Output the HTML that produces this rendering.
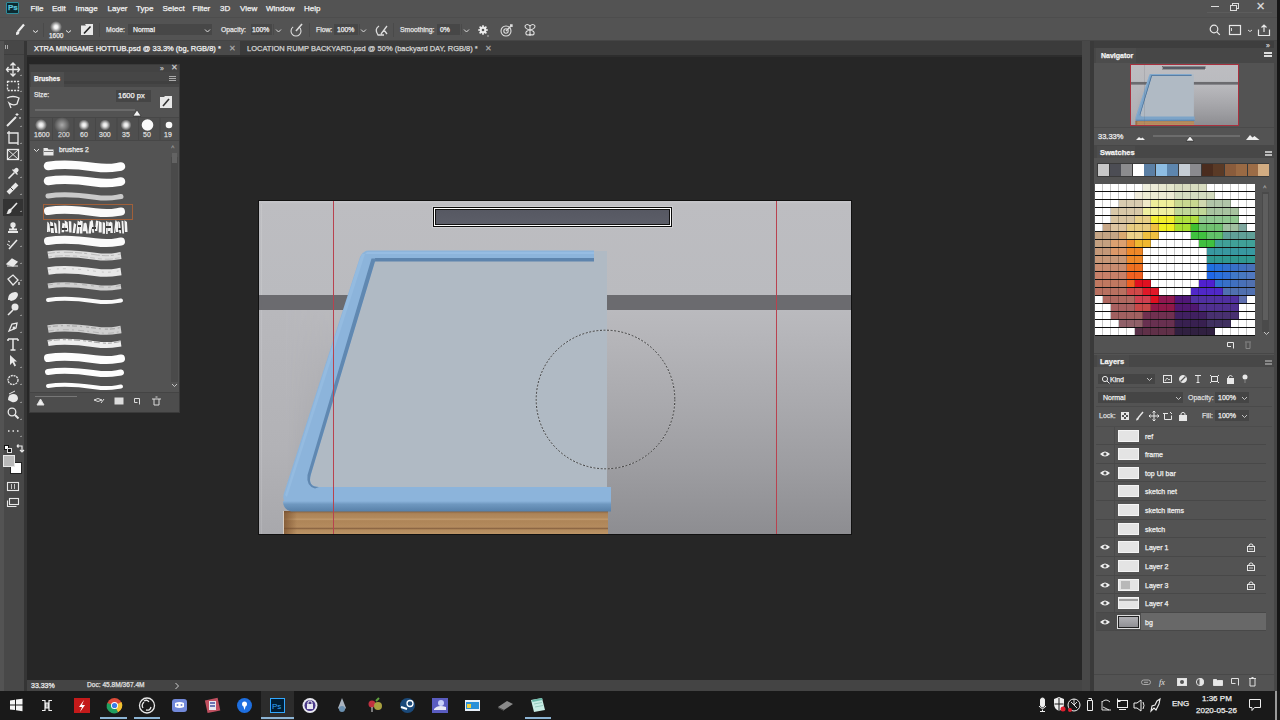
<!DOCTYPE html>
<html><head><meta charset="utf-8">
<style>
*{margin:0;padding:0;box-sizing:border-box}
html,body{width:1280px;height:720px;overflow:hidden;background:#262626;font-family:"Liberation Sans",sans-serif;color:#ddd}
.a{position:absolute}
.t{position:absolute;white-space:nowrap;font-size:9px;color:#e6e6e6;line-height:1;-webkit-text-stroke:0.25px currentColor}
svg{position:absolute;overflow:visible}
</style></head><body>
<!-- menu bar -->
<div class="a" style="left:0;top:0;width:1280px;height:17px;background:#535353"></div>
<div class="a" style="left:6px;top:2px;width:13px;height:12px;background:#0c2a30;border:1px solid #2e8c9c;border-radius:1px"></div>
<div class="t" style="left:8px;top:4px;font-size:8px;color:#5cc4dc;font-weight:bold">Ps</div>
<div class="t" style="left:30.5px;top:5px;font-size:8px;color:#f2f2f2">File</div>
<div class="t" style="left:52px;top:5px;font-size:8px;color:#f2f2f2">Edit</div>
<div class="t" style="left:75.5px;top:5px;font-size:8px;color:#f2f2f2">Image</div>
<div class="t" style="left:107.5px;top:5px;font-size:8px;color:#f2f2f2">Layer</div>
<div class="t" style="left:136px;top:5px;font-size:8px;color:#f2f2f2">Type</div>
<div class="t" style="left:162.5px;top:5px;font-size:8px;color:#f2f2f2">Select</div>
<div class="t" style="left:192.5px;top:5px;font-size:8px;color:#f2f2f2">Filter</div>
<div class="t" style="left:220px;top:5px;font-size:8px;color:#f2f2f2">3D</div>
<div class="t" style="left:240px;top:5px;font-size:8px;color:#f2f2f2">View</div>
<div class="t" style="left:266px;top:5px;font-size:8px;color:#f2f2f2">Window</div>
<div class="t" style="left:304px;top:5px;font-size:8px;color:#f2f2f2">Help</div>
<!-- window controls -->
<div class="a" style="left:1211px;top:6px;width:8px;height:1px;background:#ddd"></div>
<div class="a" style="left:1232px;top:3px;width:7px;height:6px;border:1px solid #ddd"></div>
<div class="a" style="left:1230px;top:5px;width:7px;height:6px;border:1px solid #ddd;background:#535353"></div>
<div class="t" style="left:1256px;top:1px;font-size:11px;color:#ddd">&#x2715;</div>
<!-- options bar -->
<div class="a" style="left:0;top:17px;width:1280px;height:24px;background:#535353;border-top:1px solid #4d4d4d"></div>
<div class="a" style="left:0;top:40px;width:1280px;height:1px;background:#454545"></div>
<!-- tab bar -->
<div class="a" style="left:27px;top:41px;width:1055px;height:15px;background:#3b3b3b"></div>
<div class="a" style="left:27px;top:41px;width:213px;height:15px;background:#4a4a4a"></div>
<div class="t" style="left:34px;top:45px;font-size:7.5px;color:#f4f4f4">XTRA MINIGAME HOTTUB.psd @ 33.3% (bg, RGB/8) *</div>
<div class="t" style="left:229px;top:45px;font-size:8px;color:#aaa">&#x2715;</div>
<div class="t" style="left:247px;top:45px;font-size:7.5px;color:#d4d4d4">LOCATION RUMP BACKYARD.psd @ 50% (backyard DAY, RGB/8) *</div>
<div class="t" style="left:485px;top:45px;font-size:8px;color:#aaa">&#x2715;</div>
<!-- left toolbar -->
<div class="a" style="left:0;top:41px;width:27px;height:650px;background:#484848"></div>
<div class="a" style="left:0;top:41px;width:4px;height:650px;background:#535353"></div>
<div class="a" style="left:24px;top:41px;width:3px;height:650px;background:#353535"></div>
<div class="a" style="left:4px;top:41px;width:20px;height:14px;background:#474747;border-bottom:1px solid #3e3e3e"></div><div class="a" style="left:5px;top:45px;width:1px;height:4px;background:#aaa"></div><div class="a" style="left:7px;top:45px;width:1px;height:4px;background:#aaa"></div>
<!-- canvas area top stripe -->
<div class="a" style="left:27px;top:55px;width:1055px;height:2px;background:#2d2d2d"></div>
<!-- right dock base -->
<div class="a" style="left:1082px;top:41px;width:198px;height:650px;background:#484848"></div>
<div class="a" style="left:1090px;top:41px;width:4px;height:650px;background:#3a3a3a"></div>
<div class="a" style="left:1094px;top:48px;width:180px;height:643px;background:#535353"></div>
<div class="a" style="left:1274px;top:41px;width:3px;height:650px;background:#474747"></div>
<!-- status bar -->
<div class="a" style="left:27px;top:680px;width:1055px;height:11px;background:#444444"></div>
<div class="t" style="left:31px;top:682px;font-size:7px;color:#f0f0f0">33.33%</div>
<div class="t" style="left:87px;top:682px;font-size:6.6px;color:#e0e0e0">Doc: 45.8M/367.4M</div>
<svg width="6" height="8" style="left:174px;top:682px" fill="none" stroke="#ddd" stroke-width="0.9"><path d="M1.5,1l3,3l-3,3"/></svg>
<!-- taskbar -->
<div class="a" style="left:0;top:691px;width:1280px;height:29px;background:#191919"></div>
<!-- document -->
<div class="a" style="left:258px;top:200px;width:594px;height:335px;background:#111"></div>
<!-- options bar contents -->
<svg width="100" height="22" style="left:0;top:18px" fill="none" stroke="#eee">
  <path d="M24,6.5l-6,7" stroke-width="2.2"/><path d="M17.5,13q-2,1 -1.5,4q3,0 3.5,-2.5z" fill="#eee" stroke="none"/>
  <path d="M33,12.5l2.5,2l2.5,-2" stroke-width="1"/>
  <path d="M43.5,5v14" stroke="#4a4a4a"/>
  <path d="M66,12.5l2.5,2l2.5,-2" stroke-width="1"/>
  <path d="M99.5,5v14" stroke="#4a4a4a"/>
</svg>
<svg width="12" height="12" style="left:50px;top:21px"><defs><radialGradient id="ob"><stop offset="0" stop-color="#fff"/><stop offset="0.3" stop-color="#eee"/><stop offset="1" stop-color="#ddd" stop-opacity="0"/></radialGradient></defs><circle cx="6" cy="6" r="6" fill="url(#ob)"/></svg>
<div class="t" style="left:49px;top:33px;font-size:6.5px;color:#e8e8e8">1600</div>
<div class="a" style="left:81px;top:24px;width:12px;height:11px;background:#e8e8e8"></div>
<svg width="12" height="11" style="left:81px;top:24px"><path d="M0,0h4l1,1.5h-5z" fill="#535353"/><path d="M3,9.5l6.5,-7" stroke="#222" stroke-width="1.6"/></svg>
<div class="t" style="left:106px;top:27px;font-size:6.8px;color:#e4e4e4">Mode:</div>
<div class="a" style="left:128px;top:24px;width:84px;height:11px;background:#474747"></div>
<div class="t" style="left:133px;top:27px;font-size:6.8px;color:#f0f0f0">Normal</div>
<svg width="8" height="6" style="left:204px;top:28px" fill="none" stroke="#ddd"><path d="M1,1.5l2.5,2.5l2.5,-2.5"/></svg>
<div class="t" style="left:221px;top:27px;font-size:6.8px;color:#e4e4e4">Opacity:</div>
<div class="a" style="left:251px;top:24px;width:21px;height:11px;background:#474747"></div>
<div class="t" style="left:252px;top:27px;font-size:6.8px;color:#f0f0f0">100%</div>
<div class="a" style="left:273px;top:24px;width:1px;height:11px;background:#4a4a4a"></div>
<svg width="8" height="6" style="left:275px;top:28px" fill="none" stroke="#ddd"><path d="M1,1.5l2.5,2.5l2.5,-2.5"/></svg>
<svg width="16" height="16" style="left:289px;top:22px" fill="none" stroke="#ddd" stroke-width="1.1"><circle cx="7" cy="9" r="5" stroke-dasharray="20 6"/><path d="M7,9l6,-7" stroke-width="1.6"/></svg>
<div class="a" style="left:309px;top:23px;width:1px;height:14px;background:#4a4a4a"></div>
<div class="t" style="left:316px;top:27px;font-size:6.8px;color:#e4e4e4">Flow:</div>
<div class="a" style="left:334px;top:24px;width:24px;height:11px;background:#474747"></div>
<div class="t" style="left:337px;top:27px;font-size:6.8px;color:#f0f0f0">100%</div>
<div class="a" style="left:358.5px;top:24px;width:1px;height:11px;background:#4a4a4a"></div>
<svg width="8" height="6" style="left:360px;top:28px" fill="none" stroke="#ddd"><path d="M1,1.5l2.5,2.5l2.5,-2.5"/></svg>
<svg width="18" height="14" style="left:372px;top:23px" fill="none" stroke="#ddd" stroke-width="1.3"><path d="M7,3q-5,3 -1,9h6M9,11l6,-8M12,7l3,4"/></svg>
<div class="a" style="left:393px;top:23px;width:1px;height:14px;background:#4a4a4a"></div>
<div class="t" style="left:400px;top:27px;font-size:6.8px;color:#e4e4e4">Smoothing:</div>
<div class="a" style="left:437px;top:24px;width:23px;height:11px;background:#474747"></div>
<div class="t" style="left:440px;top:27px;font-size:6.8px;color:#f0f0f0">0%</div>
<div class="a" style="left:461px;top:24px;width:1px;height:11px;background:#4a4a4a"></div>
<svg width="8" height="6" style="left:463px;top:28px" fill="none" stroke="#ddd"><path d="M1,1.5l2.5,2.5l2.5,-2.5"/></svg>
<svg width="14" height="14" style="left:477px;top:24px"><circle cx="6" cy="6" r="3.4" fill="#eee"/><path d="M6,1.2v9.6M1.2,6h9.6M2.6,2.6l6.8,6.8M9.4,2.6l-6.8,6.8" stroke="#eee" stroke-width="1.6"/><circle cx="6" cy="6" r="1.3" fill="#535353"/><path d="M10,12h2" stroke="#ccc" stroke-width="0.8"/></svg>
<svg width="16" height="16" style="left:499px;top:22px" fill="none" stroke="#ddd" stroke-width="1.1"><circle cx="7" cy="9" r="5"/><circle cx="7" cy="9" r="2.2"/><path d="M7,9l6,-6M11,3h2v2" stroke-width="1.3"/></svg>
<svg width="16" height="16" style="left:522px;top:22px" fill="none" stroke="#ddd" stroke-width="1.1"><path d="M8,3v11M8,4q-3,-3 -5,0q0,3 5,4q-5,1 -4,4q2,2 4,0M8,4q3,-3 5,0q0,3 -5,4q5,1 4,4q-2,2 -4,0" /></svg>
<!-- right side options -->
<svg width="70" height="16" style="left:1207px;top:22px" fill="none" stroke="#e8e8e8" stroke-width="1.2">
  <circle cx="7" cy="7" r="3.8"/><path d="M9.8,9.8l3,3"/>
  <rect x="22.5" y="3.5" width="11" height="9"/><path d="M24.5,6v3" stroke-width="0.9"/>
  <path d="M41,8l2,1.5l2,-1.5" stroke-width="0.9"/>
  <path d="M51.5,7.5v6h11v-6M57,3v7M54.5,5.5l2.5,-2.5l2.5,2.5"/>
</svg>
<!-- document content -->
<div class="a" style="left:259px;top:201px;width:592px;height:333px;overflow:hidden;background:linear-gradient(#c6c6ca,#bdbdc1 3px,#babbbf 94px,#bababe 110px,#b3b3b7 150px,#a8a8ac 210px,#9c9ca0 270px,#8d8d91 333px)">
  <div class="a" style="left:0;top:109px;width:90px;height:224px;background:linear-gradient(#b8b8bc,#b2b2b6 140px,#a8a8ac 224px);-webkit-mask-image:linear-gradient(to right,#000 30%,transparent);mask-image:linear-gradient(to right,#000 30%,transparent)"></div>
  <div class="a" style="left:2px;top:3px;width:1px;height:330px;background:rgba(255,255,255,0.12)"></div>
  <div class="a" style="left:0;top:94px;width:592px;height:15px;background:#6b6b6f"></div>
  <svg width="592" height="333" style="left:0;top:0">
    <defs>
      <linearGradient id="wood" x1="0" y1="0" x2="0" y2="1">
        <stop offset="0" stop-color="#84603e"/>
        <stop offset="0.12" stop-color="#ad8458"/>
        <stop offset="0.3" stop-color="#b38a5c"/>
        <stop offset="0.36" stop-color="#c29a6c"/>
        <stop offset="0.42" stop-color="#ae8558"/>
        <stop offset="0.7" stop-color="#b48b5e"/>
        <stop offset="0.76" stop-color="#8c6644"/>
        <stop offset="0.82" stop-color="#b48c5e"/>
        <stop offset="1" stop-color="#bc9466"/>
      </linearGradient>
      <linearGradient id="woodL" x1="0" y1="0" x2="1" y2="0">
        <stop offset="0" stop-color="#704828" stop-opacity="0.7"/>
        <stop offset="1" stop-color="#704828" stop-opacity="0"/>
      </linearGradient>
      <linearGradient id="bblue" x1="0" y1="0" x2="0" y2="1">
        <stop offset="0" stop-color="#8cb4db"/>
        <stop offset="0.3" stop-color="#6f98c0"/>
        <stop offset="1" stop-color="#5880a8"/>
      </linearGradient>
    </defs>
    <polygon points="106,50 348,50 348,292 30,292" fill="#b0bac4"/>
    <rect x="24" y="310" width="325" height="23" fill="url(#wood)"/>
    <rect x="24" y="310" width="14" height="23" fill="url(#woodL)"/>
    <rect x="24" y="310" width="1" height="23" fill="#d8ccc0"/>
    <path d="M110,49.5 L335,49.5 L335,60 L116,60 L52,273 Q48,286 60,286 L352,286 L352,304 L32,304 Q22,302 25,292 L101,56 Q104,49.5 110,49.5 Z" fill="#8cb4db"/>
    <path d="M108,51 L335,51 L335,53 L106,53 Z" fill="#9cc2e6" opacity="0.6"/>
    <path d="M100,60 L103,53 L106,53 L28,296 L26,294 Z" fill="#9cc2e6" opacity="0.5"/>
    <path d="M116,57 L335,57 L335,60.5 L116,60.5 Z" fill="#5d84ad"/>
    <path d="M112.5,57.5 L117,57.5 L116,60.5 L52,273 Q48,286 60,286 L56,287.5 Q47,285 48.5,274 Z" fill="#6088b1"/>
    <path d="M24,300 L352,300 L352,310.5 L32,310.5 Q24,308.5 24,300 Z" fill="url(#bblue)"/>
  </svg>
  <!-- top UI bar -->
  <div class="a" style="left:173px;top:5px;width:241px;height:22px;border:1px solid rgba(255,255,255,0.25)"></div>
  <div class="a" style="left:174px;top:6px;width:239px;height:20px;border:1px solid #0a0a0a;background:#fff"></div>
  <div class="a" style="left:176px;top:8px;width:235px;height:16px;border:1px solid #111;background:linear-gradient(#565862,#5c5e68)"></div>
  <!-- guides -->
  <div class="a" style="left:74px;top:0;width:1px;height:333px;background:#b8424f"></div>
  <div class="a" style="left:517px;top:0;width:1px;height:333px;background:#b8424f"></div>
  <!-- brush cursor -->
  <svg width="592" height="333" style="left:0;top:0">
    <circle cx="346.5" cy="198.5" r="69.3" fill="none" stroke="#e0e0e0" stroke-width="0.8" opacity="0.5"/><circle cx="346.5" cy="198.5" r="69.3" fill="none" stroke="#1a1a1a" stroke-width="0.8" stroke-dasharray="2 1.6"/>
  </svg>
</div>
<!-- toolbar icons -->

<div class="a" style="left:3px;top:199px;width:20px;height:17px;background:#333333"></div>
<svg width="27" height="460" style="left:0;top:60px" fill="none" stroke="#e8e8e8" stroke-width="1.3">
  <!-- move y69 -->
  <path d="M13,3v13M6.5,9.5h13M10.5,5.5l2.5-2.5l2.5,2.5M10.5,13.5l2.5,2.5l2.5-2.5M8.5,7l-2,2.5l2,2.5M17.5,7l2,2.5l-2,2.5"/>
  <!-- marquee y86 -->
  <rect x="7.5" y="21.5" width="11" height="9" stroke-dasharray="2 1.2"/>
  <!-- lasso y103 -->
  <path d="M7,38 q6,-3 12,0 l-2,6 q-4,2 -8,-1 l2,5"/>
  <!-- magic wand y120 -->
  <path d="M7,66 l9,-9" stroke-width="2"/><path d="M17,53v3M15.5,54.5h3M19,58h2" stroke-width="1"/>
  <!-- crop y138 -->
  <path d="M9,71v12h9M7,73h11v12" />
  <!-- frame y155 -->
  <rect x="7.5" y="89.5" width="11" height="10"/><path d="M7.5,89.5l11,10M18.5,89.5l-11,10" stroke-width="1"/>
  <!-- eyedropper y172 -->
  <path d="M8.5,118.5 l6,-6" stroke-width="1.6"/><path d="M13,110.5l2,-2q1.5,-1.5 3,0t0,3l-2,2z" fill="#e8e8e8" stroke="none"/><path d="M12.5,109.5l5,5" stroke-width="1.2"/>
  <!-- healing y189 -->
  <path d="M8,133 l9,-9" stroke-width="4"/><path d="M10,127l3,3" stroke="#484848" stroke-width="1"/>
  <!-- brush y207 -->
  <path d="M11,149.5 l6,-6.5" stroke-width="1.6"/><path d="M10.5,148.5q-2,0 -2.8,2.5q-0.5,2 -1.2,3q3,0 4.5,-1.5q1,-1.5 0.5,-3z" fill="#e8e8e8" stroke="none"/>
  <!-- stamp y224 -->
  <path d="M8,172h10M9,169.5h8M13,166v3" stroke-width="2"/><circle cx="13" cy="165" r="2" fill="#e8e8e8"/>
  <!-- history brush y241 -->
  <path d="M9,189 l8,-9" stroke-width="1.6"/><path d="M7,184l3,2M8,181l2,1" stroke-width="1"/>
  <!-- eraser y259 -->
  <path d="M7,204 l5,-5 l5,3 l-4,4 z" fill="#e8e8e8"/><path d="M7,206h11" stroke-width="1"/>
  <!-- bucket y276 -->
  <path d="M8,219 l5,-4 l5,5 l-5,5 z" /><path d="M19,222v3" stroke-width="1.4"/>
  <!-- smudge y293 -->
  <path d="M8,239 q0,-6 7,-7 q3,0 3,3 q-1,5 -7,6 z" fill="#e8e8e8" stroke="none"/><path d="M8,240l2,-2" stroke-width="1"/>
  <!-- dodge y310 -->
  <circle cx="15" cy="247" r="3.5" fill="#e8e8e8" stroke="none"/><path d="M13,250l-5,5" stroke-width="1.6"/>
  <!-- pen y327 -->
  <path d="M9,271 l3,-7 l5,-1 l-1,5 z"/><circle cx="14" cy="268" r="0.8" fill="#e8e8e8"/>
  <!-- type y344 -->
  <path d="M8,279h10M13,279v11M10.5,290h5M8,279v2M18,279v2" stroke-width="1.5"/>
  <!-- path select y362 -->
  <path d="M10,295 l0,10 l2.5,-2.5 l2,4 l1.5,-1 l-2,-4 l3,0 z" fill="#e8e8e8" stroke="none"/>
  <!-- ellipse y380 -->
  <ellipse cx="13" cy="320" rx="5" ry="4.5" stroke-dasharray="2 0.8"/>
  <!-- hand y397 -->
  <path d="M8,340 q0,-6 5,-6 q5,0 5,5 q-2,4 -6,3 z" fill="#e8e8e8" stroke="none"/><path d="M9,334 l6,-3" stroke-width="1"/>
  <!-- zoom y414 -->
  <circle cx="12" cy="352" r="3.8"/><path d="M15,355 l3.5,3.5" stroke-width="2"/>
  <!-- dots y431 -->
  <path d="M8,371h1.5M12.5,371h1.5M17,371h1.5" stroke-width="1.5"/>
</svg>
<!-- tiny triangles -->
<svg width="27" height="460" style="left:0;top:60px" fill="#cfcfcf">
  <path d="M20,16h1.5v-1.5z M20,32h1.5v-1.5z M20,50h1.5v-1.5z M20,67h1.5v-1.5z M20,84h1.5v-1.5z M20,101h1.5v-1.5z M20,118h1.5v-1.5z M20,135h1.5v-1.5z M20,152h1.5v-1.5z M20,170h1.5v-1.5z M20,187h1.5v-1.5z M20,204h1.5v-1.5z M20,221h1.5v-1.5z M20,239h1.5v-1.5z M20,256h1.5v-1.5z M20,273h1.5v-1.5z M20,290h1.5v-1.5z M20,308h1.5v-1.5z M20,325h1.5v-1.5z M20,343h1.5v-1.5z M20,360h1.5v-1.5z M20,377h1.5v-1.5z"/>
</svg>
<!-- swap / default colors -->
<div class="a" style="left:4px;top:445px;width:5px;height:5px;background:#fff;border:1px solid #111"></div>
<div class="a" style="left:7px;top:448px;width:5px;height:5px;background:#111;border:1px solid #ddd"></div>
<svg width="10" height="10" style="left:15px;top:444px" fill="none" stroke="#e8e8e8" stroke-width="1.2"><path d="M2,2h5v6M5,6l2,2l2,-2M2,2l1.5,-1.5M2,2l1.5,1.5"/></svg>
<!-- fg/bg color -->
<div class="a" style="left:10px;top:462px;width:12px;height:12px;background:#fff;border:1px solid #222"></div>
<div class="a" style="left:3px;top:455px;width:12px;height:12px;background:#b9b9b9;border:1px solid #e8e8e8"></div>
<!-- quick mask / screen mode -->
<svg width="27" height="40" style="left:0;top:478px" fill="none" stroke="#e8e8e8" stroke-width="1.1">
  <rect x="7.5" y="4.5" width="11" height="8"/><path d="M11.5,6v5M14.5,6v5" stroke-width="0.8"/>
  <rect x="9.5" y="20.5" width="9" height="6"/><path d="M7.5,22.5v6h9"/>
</svg>
<!-- brushes panel -->
<div class="a" style="left:29px;top:64px;width:151px;height:349px;background:#535353;border:1px solid #3a3a3a"></div>
<div class="a" style="left:30px;top:65px;width:149px;height:7px;background:#434343"></div>
<div class="a" style="left:30px;top:72px;width:149px;height:15px;background:#464646"></div>
<div class="a" style="left:64px;top:81px;width:115px;height:3px;background:#404040"></div>
<div class="a" style="left:31px;top:72px;width:33px;height:15px;background:#4e4e4e"></div>
<div class="t" style="left:34px;top:76px;font-size:6.5px;color:#f4f4f4;font-weight:bold">Brushes</div>
<div class="t" style="left:160px;top:65px;font-size:7px;color:#bbb">&#xBB;</div>
<div class="t" style="left:171px;top:64px;font-size:8px;color:#ccc">&#x2715;</div>
<div class="a" style="left:169px;top:76px;width:7px;height:1px;background:#aaa;box-shadow:0 2px 0 #aaa,0 4px 0 #aaa"></div>
<div class="t" style="left:34px;top:92px;font-size:6.8px;color:#e8e8e8">Size:</div>
<div class="a" style="left:116px;top:90px;width:35px;height:12px;background:#454545"></div>
<div class="t" style="left:118px;top:92px;font-size:7.5px;color:#f0f0f0">1600 px</div>
<div class="a" style="left:160px;top:96px;width:12px;height:12px;background:#e8e8e8"></div>
<svg width="12" height="12" style="left:160px;top:96px"><path d="M0,0h4l1,1h-5z" fill="#535353"/><path d="M3,10l6,-7" stroke="#333" stroke-width="1.6"/></svg>
<div class="a" style="left:35px;top:109px;width:100px;height:2px;background:#6a6a6a"></div>
<svg width="10" height="8" style="left:132px;top:110px"><path d="M5,0L9,6H1Z" fill="#f4f4f4" stroke="#222" stroke-width="0.6"/></svg>
<div class="a" style="left:30px;top:117px;width:149px;height:1px;background:#474747"></div>
<!-- preset row -->
<div class="a" style="left:30px;top:118px;width:149px;height:22px;background:#4f4f4f"></div>
<svg width="150" height="22" style="left:30px;top:118px">
  <defs><radialGradient id="sb"><stop offset="0" stop-color="#fff"/><stop offset="0.35" stop-color="#e0e0e0"/><stop offset="1" stop-color="#e0e0e0" stop-opacity="0"/></radialGradient>
  <radialGradient id="sb2"><stop offset="0" stop-color="#aaa"/><stop offset="1" stop-color="#aaa" stop-opacity="0"/></radialGradient></defs>
  <path d="M22.5,0v22M44,0v22M65.5,0v22M87,0v22M108.5,0v22M130,0v22" stroke="#474747" stroke-width="1"/>
  <circle cx="11" cy="7" r="6" fill="url(#sb)"/>
  <circle cx="32" cy="7" r="8" fill="url(#sb2)"/>
  <circle cx="54" cy="7" r="5.5" fill="url(#sb)"/>
  <circle cx="75" cy="7" r="5.5" fill="url(#sb)"/>
  <circle cx="96" cy="7" r="5.5" fill="url(#sb)"/>
  <circle cx="117.5" cy="7" r="5.8" fill="#fafafa"/>
  <circle cx="139" cy="7" r="3.3" fill="#fafafa"/>
</svg>
<div class="t" style="left:34px;top:131px;font-size:7px;color:#ddd">1600</div>
<div class="t" style="left:58px;top:131px;font-size:7px;color:#ccc">200</div>
<div class="t" style="left:80px;top:131px;font-size:7px;color:#ddd">60</div>
<div class="t" style="left:99px;top:131px;font-size:7px;color:#ddd">300</div>
<div class="t" style="left:122px;top:131px;font-size:7px;color:#ddd">35</div>
<div class="t" style="left:143px;top:131px;font-size:7px;color:#ddd">50</div>
<div class="t" style="left:164px;top:131px;font-size:7px;color:#ddd">19</div>
<div class="a" style="left:30px;top:140px;width:149px;height:1px;background:#474747"></div>
<!-- folder row -->
<svg width="30" height="12" style="left:33px;top:145px" fill="none" stroke="#e0e0e0">
  <path d="M1,4l2.5,2.5l2.5,-2.5" stroke-width="1"/>
  <path d="M10.5,3.5v7h10v-6h-5l-1,-1.5h-4z" fill="#e8e8e8" stroke="none"/>
  <path d="M11,6.5h9" stroke="#555" stroke-width="0.8"/>
</svg>
<div class="t" style="left:59px;top:147px;font-size:6.8px;color:#eee">brushes 2</div>
<!-- scrollbar -->
<div class="a" style="left:171px;top:157px;width:7px;height:225px;background:#4a4a4a"></div>
<div class="a" style="left:172px;top:153px;width:5px;height:10px;background:#636363"></div>
<div class="t" style="left:171px;top:144px;font-size:6px;color:#999">&#x2C4;</div>
<svg width="7" height="5" style="left:171.0px;top:383.0px" fill="none" stroke="#d0d0d0" stroke-width="0.9"><path d="M1,1l2.5,2.5l2.5,-2.5"/></svg>
<!-- brush strokes -->
<svg width="95" height="240" style="left:40px;top:155px" fill="none" stroke-linecap="round">
  <path d="M8,11.0 C22,8.5 40,10.0 55,12.2 S74,12.5 81,11.5" stroke="#fdfdfd" stroke-width="8.5"/>
  <path d="M8,26.0 C22,23.5 40,25.0 55,27.2 S74,27.5 81,26.5" stroke="#fdfdfd" stroke-width="8.5"/>
  <path d="M8,41.0 C22,38.5 40,40.0 55,42.2 S74,42.5 81,41.5" stroke="#c9c9c9" stroke-width="5"/>
  <path d="M8,56.0 C22,53.5 40,55.0 55,57.2 S74,57.5 81,56.5" stroke="#fafafa" stroke-width="8"/>
  <path d="M8,86.0 C22,83.5 40,85.0 55,87.2 S74,87.5 81,86.5" stroke="#fafafa" stroke-width="8"/>
  <path d="M8,100.0 C22,97.5 40,99.0 55,101.2 S74,101.5 81,100.5" stroke="#dedede" stroke-width="7" stroke-linecap="butt"/>
  <path d="M8,116.0 C22,113.5 40,115.0 55,117.2 S74,117.5 81,116.5" stroke="#e8e8e8" stroke-width="7.5" stroke-linecap="butt"/>
  <path d="M8,131.0 C22,128.5 40,130.0 55,132.2 S74,132.5 81,131.5" stroke="#d0d0d0" stroke-width="5" stroke-linecap="butt"/>
  <path d="M8,145.0 C22,142.5 40,144.0 55,146.2 S74,146.5 81,145.5" stroke="#fafafa" stroke-width="4"/>
  <path d="M8,174.0 C22,171.5 40,173.0 55,175.2 S74,175.5 81,174.5" stroke="#cfcfcf" stroke-width="7.5" stroke-linecap="butt"/>
  <path d="M8,188.0 C22,185.5 40,187.0 55,189.2 S74,189.5 81,188.5" stroke="#eeeeee" stroke-width="6" stroke-linecap="butt"/>
  <path d="M8,203.0 C22,200.5 40,202.0 55,204.2 S74,204.5 81,203.5" stroke="#fdfdfd" stroke-width="8"/>
  <path d="M8,217.0 C22,214.5 40,216.0 55,218.2 S74,218.5 81,217.5" stroke="#fdfdfd" stroke-width="6"/>
  <path d="M8,231.0 C22,228.5 40,230.0 55,232.2 S74,232.5 81,231.5" stroke="#fdfdfd" stroke-width="4"/>
</svg>
<!-- texture stroke -->
<svg width="95" height="16" style="left:40px;top:219px">
  <path d="M7.0,13.1L7.3,2.6L9.0,3.9L8.7,13.1ZM9.0,12.8L8.3,3.5L9.5,5.5L10.3,12.8ZM11.1,13.9L10.0,2.4L12.9,3.7L14.0,13.9ZM15.2,14.0L13.9,3.2L16.2,4.7L17.5,14.0ZM18.4,14.6L18.3,1.1L20.1,2.5L20.2,14.6ZM21.5,13.2L22.4,3.8L25.0,4.7L24.1,13.2ZM25.4,12.4L24.6,1.3L27.6,3.2L28.4,12.4ZM29.2,13.5L28.8,1.9L31.3,2.6L31.6,13.5ZM32.6,14.0L33.9,3.7L36.2,5.4L34.9,14.0ZM36.3,14.6L37.7,1.5L40.3,3.3L38.9,14.6ZM39.8,14.5L40.0,1.6L42.7,2.2L42.4,14.5ZM42.8,12.3L43.7,4.0L46.6,4.8L45.7,12.3ZM46.2,14.6L44.8,3.3L46.6,4.5L48.0,14.6ZM48.3,14.6L49.8,2.0L52.4,3.0L50.9,14.6ZM52.3,13.8L50.9,1.2L52.8,1.6L54.2,13.8ZM54.9,12.1L56.0,1.5L58.4,2.1L57.3,12.1ZM58.7,13.4L58.8,2.1L61.7,3.4L61.7,13.4ZM62.6,14.8L62.7,2.9L65.0,3.7L65.0,14.8ZM66.1,14.9L66.1,1.9L67.8,3.0L67.7,14.9ZM68.0,12.1L68.4,2.7L70.4,4.0L70.1,12.1ZM70.4,14.0L70.0,2.4L72.4,3.8L72.9,14.0ZM74.0,14.0L75.4,1.2L76.6,1.7L75.2,14.0ZM76.0,13.1L75.5,2.0L77.9,2.7L78.4,13.1ZM79.4,14.3L78.0,2.1L79.8,3.3L81.2,14.3ZM82.3,14.4L81.5,1.7L83.3,2.0L84.1,14.4ZM84.9,13.0L84.4,1.3L87.0,3.0L87.5,13.0Z" fill="#f4f4f4"/>
  <path d="M10,8h4M22,10h5M38,7h3M52,9h4M66,8h5M78,10h3" stroke="#3a3a3a" stroke-width="2"/>
</svg>
<svg width="95" height="240" style="left:40px;top:155px" fill="none" stroke-linecap="butt">
  <path d="M8,98.5 C22,96 40,97.5 55,99.7 S74,100 81,99" stroke="#9a9a9a" stroke-width="0.8" stroke-dasharray="7 2 3 4 9 2" opacity="0.7"/>
  <path d="M8,102 C22,99.5 40,101 55,103.2 S74,103.5 81,102.5" stroke="#a8a8a8" stroke-width="0.8" stroke-dasharray="4 3 8 2 5 3" opacity="0.7"/>
  <path d="M8,115 C22,112.5 40,114 55,116.2 S74,116.5 81,115.5" stroke="#b0b0b0" stroke-width="1" stroke-dasharray="3 6 2 4" opacity="0.6"/>
  <path d="M8,130 C22,127.5 40,129 55,131.2 S74,131.5 81,130.5" stroke="#8a8a8a" stroke-width="0.8" stroke-dasharray="5 4 3 5" opacity="0.6"/>
  <path d="M8,172 C22,169.5 40,171 55,173.2 S74,173.5 81,172.5" stroke="#9a9a9a" stroke-width="1.2" stroke-dasharray="3 2 5 3 2 4" opacity="0.7"/>
  <path d="M8,176 C22,173.5 40,175 55,177.2 S74,177.5 81,176.5" stroke="#a0a0a0" stroke-width="1" stroke-dasharray="6 3 2 4" opacity="0.6"/>
  <path d="M8,186 C22,183.5 40,185 55,187.2 S74,187.5 81,186.5" stroke="#777" stroke-width="0.9" stroke-dasharray="4 2 6 3 3 2" opacity="0.7"/>
</svg>
<!-- selected box -->
<div class="a" style="left:43px;top:204px;width:90px;height:16px;border:1px solid #a0603a"></div>
<!-- bottom toolbar -->
<div class="a" style="left:30px;top:392px;width:149px;height:20px;background:#4d4d4d;border-top:1px solid #444"></div>
<div class="a" style="left:35px;top:396px;width:42px;height:1px;background:#777"></div>
<svg width="150" height="16" style="left:30px;top:394px" fill="none" stroke="#dcdcdc" stroke-width="1">
  <path d="M7,11L10.5,5L14,11Z" fill="#f0f0f0"/>
  <path d="M64,6q4,-3 8,0q-4,3 -8,0z M71,9l3,-4"/>
  <rect x="85" y="4" width="8" height="6" fill="#dcdcdc"/>
  <path d="M104.5,4.5h5v6M104.5,4.5v4h3"/>
  <path d="M122,5h9M124,5v6h5v-6M125.5,3h2"/>
</svg>
<!-- right dock -->
<div class="a" style="left:1094px;top:41px;width:180px;height:7px;background:#3e3e3e"></div>
<div class="t" style="left:1266px;top:42px;font-size:7px;color:#ccc">&#xBB;</div>
<!-- Navigator -->
<div class="a" style="left:1094px;top:48px;width:180px;height:15px;background:#474747"></div>
<div class="a" style="left:1096px;top:48px;width:40px;height:15px;background:#4c4c4c"></div>
<div class="t" style="left:1101px;top:52px;font-size:7px;color:#f4f4f4;font-weight:bold">Navigator</div>
<div class="a" style="left:1264px;top:52px;width:8px;height:2px;background:#ddd;box-shadow:0 3px 0 #ddd"></div>
<div class="a" style="left:1130px;top:64px;width:109px;height:62px;background:#a8303e"></div>
<div class="a" style="left:1131px;top:65px;width:107px;height:60px;overflow:hidden"><div class="a" style="left:0;top:0;width:592px;height:333px;transform-origin:0 0;transform:scale(0.18074,0.18018)"><!-- document content -->
<div class="a" style="left:0;top:0;width:592px;height:333px;overflow:hidden;background:linear-gradient(#c6c6ca,#bdbdc1 3px,#babbbf 94px,#bababe 110px,#b3b3b7 150px,#a8a8ac 210px,#9c9ca0 270px,#8d8d91 333px)">
  <div class="a" style="left:0;top:109px;width:90px;height:224px;background:linear-gradient(#b8b8bc,#b2b2b6 140px,#a8a8ac 224px);-webkit-mask-image:linear-gradient(to right,#000 30%,transparent);mask-image:linear-gradient(to right,#000 30%,transparent)"></div>
  <div class="a" style="left:2px;top:3px;width:1px;height:330px;background:rgba(255,255,255,0.12)"></div>
  <div class="a" style="left:0;top:94px;width:592px;height:15px;background:#6b6b6f"></div>
  <svg width="592" height="333" style="left:0;top:0">
    <defs>
      <linearGradient id="wood2" x1="0" y1="0" x2="0" y2="1">
        <stop offset="0" stop-color="#84603e"/>
        <stop offset="0.12" stop-color="#ad8458"/>
        <stop offset="0.3" stop-color="#b38a5c"/>
        <stop offset="0.36" stop-color="#c29a6c"/>
        <stop offset="0.42" stop-color="#ae8558"/>
        <stop offset="0.7" stop-color="#b48b5e"/>
        <stop offset="0.76" stop-color="#8c6644"/>
        <stop offset="0.82" stop-color="#b48c5e"/>
        <stop offset="1" stop-color="#bc9466"/>
      </linearGradient>
      <linearGradient id="woodL2" x1="0" y1="0" x2="1" y2="0">
        <stop offset="0" stop-color="#704828" stop-opacity="0.7"/>
        <stop offset="1" stop-color="#704828" stop-opacity="0"/>
      </linearGradient>
      <linearGradient id="bblue2" x1="0" y1="0" x2="0" y2="1">
        <stop offset="0" stop-color="#7ca4c8"/>
        <stop offset="0.3" stop-color="#6f98c0"/>
        <stop offset="1" stop-color="#5880a8"/>
      </linearGradient>
    </defs>
    <polygon points="106,50 348,50 348,292 30,292" fill="#b0bac4"/>
    <rect x="24" y="310" width="325" height="23" fill="url(#wood2)"/>
    <rect x="24" y="310" width="14" height="23" fill="url(#woodL2)"/>
    <rect x="24" y="310" width="1" height="23" fill="#d8ccc0"/>
    <path d="M110,49.5 L335,49.5 L335,60 L116,60 L52,273 Q48,286 60,286 L352,286 L352,304 L32,304 Q22,302 25,292 L101,56 Q104,49.5 110,49.5 Z" fill="#7ca4c8"/>
    <path d="M108,51 L335,51 L335,53 L106,53 Z" fill="#9cc2e6" opacity="0.6"/>
    <path d="M100,60 L103,53 L106,53 L28,296 L26,294 Z" fill="#9cc2e6" opacity="0.5"/>
    <path d="M116,57 L335,57 L335,60.5 L116,60.5 Z" fill="#4a7098"/>
    <path d="M112.5,57.5 L117,57.5 L116,60.5 L52,273 Q48,286 60,286 L56,287.5 Q47,285 48.5,274 Z" fill="#4a7098"/>
    <path d="M24,300 L352,300 L352,310.5 L32,310.5 Q24,308.5 24,300 Z" fill="url(#bblue2)"/>
  </svg>
  <!-- top UI bar -->
  <div class="a" style="left:173px;top:5px;width:241px;height:22px;border:1px solid rgba(255,255,255,0.25)"></div>
  <div class="a" style="left:174px;top:6px;width:239px;height:20px;border:1px solid #0a0a0a;background:#fff"></div>
  <div class="a" style="left:176px;top:8px;width:235px;height:16px;border:1px solid #111;background:linear-gradient(#565862,#5c5e68)"></div>
  <!-- guides -->
  <div class="a" style="left:74px;top:0;width:1px;height:333px;background:#606068"></div>
  
  
</div>
</div></div>
<div class="a" style="left:1094px;top:127px;width:180px;height:1px;background:#4a4a4a"></div>
<div class="t" style="left:1098px;top:133px;font-size:7.5px;color:#f0f0f0">33.33%</div>
<svg width="180" height="14" style="left:1094px;top:130px">
  <path d="M42,10l3,-3l2,1.5l1.5,-1l2.5,2.5z" fill="#eee"/>
  <rect x="59" y="5" width="87" height="2" fill="#6c6c6c"/>
  <path d="M96,6L100,11H92Z" fill="#f4f4f4" stroke="#222" stroke-width="0.6"/>
  <path d="M152,10l4,-5l2.5,2.5l2,-1.5l5,4z" fill="#eee"/>
</svg>
<div class="a" style="left:1094px;top:145px;width:180px;height:1px;background:#474747"></div>
<!-- Swatches -->
<div class="a" style="left:1094px;top:146px;width:180px;height:12px;background:#474747"></div>
<div class="a" style="left:1097px;top:146px;width:38px;height:12px;background:#4c4c4c"></div>
<div class="t" style="left:1100px;top:149px;font-size:7.5px;color:#f4f4f4;font-weight:bold">Swatches</div>
<div class="a" style="left:1265px;top:151px;width:7px;height:2px;background:#bbb;box-shadow:0 3px 0 #bbb"></div>
<div class="a" style="left:1097px;top:163px;width:172px;height:14px;background:#3a3a3a"></div>
<div class="a" style="left:1098px;top:164px;width:11px;height:12px;background:#c8c8c8"></div>
<div class="a" style="left:1109.5px;top:164px;width:11px;height:12px;background:#4c4d54"></div>
<div class="a" style="left:1121px;top:164px;width:11px;height:12px;background:#8c8c8e"></div>
<div class="a" style="left:1132.5px;top:164px;width:11px;height:12px;background:#ffffff"></div>
<div class="a" style="left:1144px;top:164px;width:11px;height:12px;background:#5b7fa4"></div>
<div class="a" style="left:1155.5px;top:164px;width:11px;height:12px;background:#8dbde3"></div>
<div class="a" style="left:1167px;top:164px;width:11px;height:12px;background:#5d86ae"></div>
<div class="a" style="left:1178.5px;top:164px;width:11px;height:12px;background:#c4ccd4"></div>
<div class="a" style="left:1190px;top:164px;width:11px;height:12px;background:#8a8a8e"></div>
<div class="a" style="left:1201.5px;top:164px;width:11px;height:12px;background:#4a2c1e"></div>
<div class="a" style="left:1213px;top:164px;width:11px;height:12px;background:#5a3a26"></div>
<div class="a" style="left:1224.5px;top:164px;width:11px;height:12px;background:#8a5c3c"></div>
<div class="a" style="left:1236px;top:164px;width:11px;height:12px;background:#9a6a44"></div>
<div class="a" style="left:1247.5px;top:164px;width:11px;height:12px;background:#9c6c46"></div>
<div class="a" style="left:1258px;top:164px;width:11px;height:12px;background:#d2ac82"></div>
<!-- swatch scrollbar -->
<div class="a" style="left:1262px;top:192px;width:7px;height:140px;background:#4a4a4a"></div>
<div class="a" style="left:1263px;top:194px;width:5px;height:126px;background:#5e5e5e"></div>
<div class="t" style="left:1263px;top:184px;font-size:6px;color:#aaa">&#x2C4;</div>
<svg width="7" height="5" style="left:1263.0px;top:331.0px" fill="none" stroke="#d0d0d0" stroke-width="0.9"><path d="M1,1l2.5,2.5l2.5,-2.5"/></svg>
<svg width="40" height="12" style="left:1224px;top:339px" fill="none" stroke="#e8e8e8" stroke-width="1">
  <path d="M3.5,3.5h6v6M3.5,3.5v4h3.5"/>
  <path d="M21,3h6M22,3.5v6h4v-6" stroke="#888"/>
</svg>
<div class="a" style="left:1094px;top:353px;width:180px;height:1px;background:#474747"></div>
<!-- Layers -->
<div class="a" style="left:1094px;top:355px;width:180px;height:12px;background:#474747"></div>
<div class="a" style="left:1097px;top:355px;width:32px;height:12px;background:#4c4c4c"></div>
<div class="t" style="left:1100px;top:358px;font-size:7.5px;color:#f4f4f4;font-weight:bold">Layers</div>
<div class="a" style="left:1265px;top:360px;width:7px;height:2px;background:#888;box-shadow:0 3px 0 #888"></div>
<!-- kind row -->
<div class="a" style="left:1098px;top:374px;width:57px;height:10px;background:#454545"></div>
<svg width="10" height="10" style="left:1101px;top:375px" fill="none" stroke="#e8e8e8" stroke-width="1"><circle cx="4" cy="4" r="2.6"/><path d="M6,6l2.5,2.5"/></svg>
<div class="t" style="left:1110px;top:376px;font-size:7px;color:#eee">Kind</div>
<svg width="7" height="5" style="left:1146.0px;top:377.0px" fill="none" stroke="#d0d0d0" stroke-width="0.9"><path d="M1,1l2.5,2.5l2.5,-2.5"/></svg>
<svg width="100" height="14" style="left:1158px;top:372px" fill="none" stroke="#e8e8e8" stroke-width="1">
  <rect x="5.5" y="3.5" width="8" height="7"/><path d="M7,9l2,-3l2,2l1,-1" stroke-width="0.8"/>
  <circle cx="25" cy="7" r="3.5" fill="#e8e8e8"/><path d="M22.5,9.5l5,-5" stroke="#535353" stroke-width="1.2"/>
  <path d="M37,3.5h6M40,3.5v7M38.5,10.5h3"/>
  <rect x="53.5" y="4.5" width="6" height="5"/><path d="M52,3l2,2M61,3l-2,2M52,11l2,-2M61,11l-2,-2"/>
  <rect x="69.5" y="6.5" width="6" height="5" fill="#e8e8e8"/><path d="M70.5,6.5v-2q2,-2 4,0"/>
  <circle cx="87" cy="5" r="2.5" fill="#e8e8e8" stroke="none"/><path d="M87,7v4" stroke="#888"/>
</svg>
<div class="a" style="left:1096px;top:387px;width:176px;height:1px;background:#4a4a4a"></div>
<!-- blend row -->
<div class="a" style="left:1098px;top:392px;width:85px;height:11px;background:#454545"></div>
<div class="t" style="left:1103px;top:394px;font-size:7px;color:#eee">Normal</div>
<svg width="7" height="5" style="left:1175.0px;top:396.0px" fill="none" stroke="#d0d0d0" stroke-width="0.9"><path d="M1,1l2.5,2.5l2.5,-2.5"/></svg>
<div class="t" style="left:1188px;top:394px;font-size:7px;color:#ddd">Opacity:</div>
<div class="a" style="left:1215px;top:392px;width:34px;height:11px;background:#454545"></div>
<div class="t" style="left:1218px;top:394px;font-size:7px;color:#eee">100%</div>
<svg width="7" height="5" style="left:1241.0px;top:396.0px" fill="none" stroke="#d0d0d0" stroke-width="0.9"><path d="M1,1l2.5,2.5l2.5,-2.5"/></svg>
<div class="a" style="left:1096px;top:406px;width:176px;height:1px;background:#4a4a4a"></div>
<!-- lock row -->
<div class="t" style="left:1099px;top:412px;font-size:7px;color:#ddd">Lock:</div>
<svg width="80" height="14" style="left:1118px;top:409px" fill="none" stroke="#e8e8e8" stroke-width="1">
  <rect x="3.5" y="3.5" width="7" height="7"/><path d="M4,4h2v2h-2zM8,4h2v2h-2zM6,6h2v2h-2zM4,8h2v2h-2zM8,8h2v2h-2z" fill="#e8e8e8" stroke="none"/>
  <path d="M25,3l-5,6" stroke-width="1.4"/><path d="M20,8.5q-2,0.5 -2,3q2.5,0 3,-2z" fill="#e8e8e8" stroke="none"/>
  <path d="M36,2v10M31,7h10M34.5,3.5l1.5,-1.5l1.5,1.5M34.5,10.5l1.5,1.5l1.5,-1.5M32.5,5.5l-1.5,1.5l1.5,1.5M39.5,5.5l1.5,1.5l-1.5,1.5"/>
  <path d="M46.5,4.5v6h7v-4M45,4.5h5M52,3l2,2"/>
  <rect x="61.5" y="6.5" width="7" height="5" fill="#e8e8e8"/><path d="M63,6.5v-2q2,-2.5 4,0v2"/>
</svg>
<div class="t" style="left:1202px;top:412px;font-size:7px;color:#ddd">Fill:</div>
<div class="a" style="left:1215px;top:410px;width:34px;height:11px;background:#454545"></div>
<div class="t" style="left:1218px;top:412px;font-size:7px;color:#eee">100%</div>
<svg width="7" height="5" style="left:1241.0px;top:414.0px" fill="none" stroke="#d0d0d0" stroke-width="0.9"><path d="M1,1l2.5,2.5l2.5,-2.5"/></svg>
<div class="a" style="left:1096px;top:426px;width:176px;height:1px;background:#4c4c4c"></div>
<div class="a" style="left:1096px;top:444px;width:170px;height:1px;background:#484848"></div>
<div class="a" style="left:1114px;top:427px;width:1px;height:18px;background:#4a4a4a"></div>
<div class="a" style="left:1118px;top:430px;width:21px;height:12px;background:#e4e4e4;border:1px solid #f4f4f4"></div>
<div class="t" style="left:1145px;top:433px;font-size:7px;color:#f0f0f0">ref</div>
<div class="a" style="left:1096px;top:463px;width:170px;height:1px;background:#484848"></div>
<div class="a" style="left:1114px;top:445px;width:1px;height:18px;background:#4a4a4a"></div>
<svg width="12" height="8" style="left:1099px;top:450px"><path d="M1,4q5,-5 10,0q-5,5 -10,0z" fill="#f0f0f0"/><circle cx="6" cy="4" r="1.6" fill="#535353"/></svg>
<div class="a" style="left:1118px;top:448px;width:21px;height:12px;background:#e4e4e4;border:1px solid #f4f4f4"></div>
<div class="t" style="left:1145px;top:451px;font-size:7px;color:#f0f0f0">frame</div>
<div class="a" style="left:1096px;top:481px;width:170px;height:1px;background:#484848"></div>
<div class="a" style="left:1114px;top:464px;width:1px;height:18px;background:#4a4a4a"></div>
<svg width="12" height="8" style="left:1099px;top:469px"><path d="M1,4q5,-5 10,0q-5,5 -10,0z" fill="#f0f0f0"/><circle cx="6" cy="4" r="1.6" fill="#535353"/></svg>
<div class="a" style="left:1118px;top:467px;width:21px;height:12px;background:#e4e4e4;border:1px solid #f4f4f4"></div>
<div class="t" style="left:1145px;top:470px;font-size:7px;color:#f0f0f0">top UI bar</div>
<div class="a" style="left:1096px;top:500px;width:170px;height:1px;background:#484848"></div>
<div class="a" style="left:1114px;top:482px;width:1px;height:18px;background:#4a4a4a"></div>
<div class="a" style="left:1118px;top:485px;width:21px;height:12px;background:#e4e4e4;border:1px solid #f4f4f4"></div>
<div class="t" style="left:1145px;top:488px;font-size:7px;color:#f0f0f0">sketch net</div>
<div class="a" style="left:1096px;top:519px;width:170px;height:1px;background:#484848"></div>
<div class="a" style="left:1114px;top:501px;width:1px;height:18px;background:#4a4a4a"></div>
<div class="a" style="left:1118px;top:504px;width:21px;height:12px;background:#e4e4e4;border:1px solid #f4f4f4"></div>
<div class="t" style="left:1145px;top:507px;font-size:7px;color:#f0f0f0">sketch items</div>
<div class="a" style="left:1096px;top:537px;width:170px;height:1px;background:#484848"></div>
<div class="a" style="left:1114px;top:520px;width:1px;height:18px;background:#4a4a4a"></div>
<div class="a" style="left:1118px;top:523px;width:21px;height:12px;background:#e4e4e4;border:1px solid #f4f4f4"></div>
<div class="t" style="left:1145px;top:526px;font-size:7px;color:#f0f0f0">sketch</div>
<div class="a" style="left:1096px;top:556px;width:170px;height:1px;background:#484848"></div>
<div class="a" style="left:1114px;top:538px;width:1px;height:18px;background:#4a4a4a"></div>
<svg width="12" height="8" style="left:1099px;top:543px"><path d="M1,4q5,-5 10,0q-5,5 -10,0z" fill="#f0f0f0"/><circle cx="6" cy="4" r="1.6" fill="#535353"/></svg>
<div class="a" style="left:1118px;top:541px;width:21px;height:12px;background:#e4e4e4;border:1px solid #f4f4f4"></div>
<div class="t" style="left:1145px;top:544px;font-size:7px;color:#f0f0f0">Layer 1</div>
<svg width="10" height="10" style="left:1246px;top:542px" fill="none" stroke="#e8e8e8" stroke-width="1"><rect x="1.5" y="4.5" width="7" height="5"/><path d="M3,4.5v-1.5q2,-2.5 4,0v1.5"/><path d="M3,7h4" stroke-width="0.8"/></svg>
<div class="a" style="left:1096px;top:575px;width:170px;height:1px;background:#484848"></div>
<div class="a" style="left:1114px;top:557px;width:1px;height:18px;background:#4a4a4a"></div>
<svg width="12" height="8" style="left:1099px;top:562px"><path d="M1,4q5,-5 10,0q-5,5 -10,0z" fill="#f0f0f0"/><circle cx="6" cy="4" r="1.6" fill="#535353"/></svg>
<div class="a" style="left:1118px;top:560px;width:21px;height:12px;background:#e4e4e4;border:1px solid #f4f4f4"></div>
<div class="t" style="left:1145px;top:563px;font-size:7px;color:#f0f0f0">Layer 2</div>
<svg width="10" height="10" style="left:1246px;top:561px" fill="none" stroke="#e8e8e8" stroke-width="1"><rect x="1.5" y="4.5" width="7" height="5"/><path d="M3,4.5v-1.5q2,-2.5 4,0v1.5"/><path d="M3,7h4" stroke-width="0.8"/></svg>
<div class="a" style="left:1096px;top:593px;width:170px;height:1px;background:#484848"></div>
<div class="a" style="left:1114px;top:576px;width:1px;height:18px;background:#4a4a4a"></div>
<svg width="12" height="8" style="left:1099px;top:581px"><path d="M1,4q5,-5 10,0q-5,5 -10,0z" fill="#f0f0f0"/><circle cx="6" cy="4" r="1.6" fill="#535353"/></svg>
<div class="a" style="left:1118px;top:579px;width:21px;height:12px;background:#e4e4e4;border:1px solid #f4f4f4"></div>
<div class="a" style="left:1121px;top:581px;width:9px;height:8px;background:#b8b8b8"></div>
<div class="t" style="left:1145px;top:582px;font-size:7px;color:#f0f0f0">Layer 3</div>
<svg width="10" height="10" style="left:1246px;top:580px" fill="none" stroke="#e8e8e8" stroke-width="1"><rect x="1.5" y="4.5" width="7" height="5"/><path d="M3,4.5v-1.5q2,-2.5 4,0v1.5"/><path d="M3,7h4" stroke-width="0.8"/></svg>
<div class="a" style="left:1096px;top:612px;width:170px;height:1px;background:#484848"></div>
<div class="a" style="left:1114px;top:594px;width:1px;height:18px;background:#4a4a4a"></div>
<svg width="12" height="8" style="left:1099px;top:599px"><path d="M1,4q5,-5 10,0q-5,5 -10,0z" fill="#f0f0f0"/><circle cx="6" cy="4" r="1.6" fill="#535353"/></svg>
<div class="a" style="left:1118px;top:597px;width:21px;height:12px;background:#e4e4e4;border:1px solid #f4f4f4"></div>
<div class="a" style="left:1119px;top:599px;width:19px;height:2px;background:#9c9c9c"></div>
<div class="t" style="left:1145px;top:600px;font-size:7px;color:#f0f0f0">Layer 4</div>
<div class="a" style="left:1096px;top:613px;width:170px;height:18px;background:#4c4c4c"></div>
<div class="a" style="left:1141px;top:613px;width:125px;height:18px;background:#686868"></div>
<div class="a" style="left:1096px;top:630px;width:170px;height:1px;background:#484848"></div>
<div class="a" style="left:1114px;top:613px;width:1px;height:18px;background:#4a4a4a"></div>
<svg width="12" height="8" style="left:1099px;top:618px"><path d="M1,4q5,-5 10,0q-5,5 -10,0z" fill="#f0f0f0"/><circle cx="6" cy="4" r="1.6" fill="#535353"/></svg>
<div class="a" style="left:1117px;top:615px;width:23px;height:14px;border:1px solid #ddd;background:#222"></div>
<div class="a" style="left:1119px;top:617px;width:19px;height:10px;background:linear-gradient(#b0b0b4,#909094)"></div>
<div class="t" style="left:1145px;top:619px;font-size:7px;color:#f0f0f0">bg</div>

<!-- footer -->
<div class="a" style="left:1094px;top:674px;width:180px;height:1px;background:#484848"></div>
<svg width="130" height="14" style="left:1138px;top:675px" fill="none" stroke="#e0e0e0" stroke-width="1">
  <rect x="3.5" y="5" width="9" height="4.5" rx="2.2" stroke="#aaa"/><path d="M6,7.3h4" stroke="#aaa"/>
  <text x="21" y="10" font-size="8" font-style="italic" fill="#e8e8e8" stroke="none" font-family="Liberation Serif">fx</text>
  <rect x="39.5" y="3.5" width="9" height="7" fill="#e8e8e8"/><circle cx="44" cy="7" r="2" fill="#535353" stroke="none"/>
  <circle cx="62" cy="7" r="3.6"/><path d="M62,3.4a3.6,3.6 0 0 1 0,7.2z" fill="#e8e8e8"/>
  <path d="M75.5,4.5h3l1,1h5v5h-9z" fill="#e8e8e8"/>
  <path d="M93.5,3.5h7v7M93.5,3.5v5h4"/>
  <path d="M111,3.5h7M112,4v7h5v-7M113.5,2.5h2"/>
</svg>
<div class="a" style="left:1095px;top:184px;width:160px;height:152px;background:#111;overflow:hidden">
<div class="a" style="left:0px;top:0px;width:8px;height:7px;background:#ffffff"></div>
<div class="a" style="left:8px;top:0px;width:8px;height:7px;background:#ffffff"></div>
<div class="a" style="left:16px;top:0px;width:8px;height:7px;background:#ffffff"></div>
<div class="a" style="left:24px;top:0px;width:8px;height:7px;background:#ffffff"></div>
<div class="a" style="left:32px;top:0px;width:8px;height:7px;background:#ffffff"></div>
<div class="a" style="left:40px;top:0px;width:8px;height:7px;background:#ffffff"></div>
<div class="a" style="left:48px;top:0px;width:8px;height:7px;background:#eeeedd"></div>
<div class="a" style="left:56px;top:0px;width:8px;height:7px;background:#ecebd8"></div>
<div class="a" style="left:64px;top:0px;width:8px;height:7px;background:#e8e8d0"></div>
<div class="a" style="left:72px;top:0px;width:8px;height:7px;background:#e4e6cc"></div>
<div class="a" style="left:80px;top:0px;width:8px;height:7px;background:#d8dcc0"></div>
<div class="a" style="left:88px;top:0px;width:8px;height:7px;background:#d8dcc0"></div>
<div class="a" style="left:96px;top:0px;width:8px;height:7px;background:#d8dcc0"></div>
<div class="a" style="left:104px;top:0px;width:8px;height:7px;background:#d8dcc0"></div>
<div class="a" style="left:112px;top:0px;width:8px;height:7px;background:#ffffff"></div>
<div class="a" style="left:120px;top:0px;width:8px;height:7px;background:#ffffff"></div>
<div class="a" style="left:128px;top:0px;width:8px;height:7px;background:#ffffff"></div>
<div class="a" style="left:136px;top:0px;width:8px;height:7px;background:#ffffff"></div>
<div class="a" style="left:144px;top:0px;width:8px;height:7px;background:#ffffff"></div>
<div class="a" style="left:152px;top:0px;width:8px;height:7px;background:#ffffff"></div>
<div class="a" style="left:0px;top:8px;width:8px;height:7px;background:#ffffff"></div>
<div class="a" style="left:8px;top:8px;width:8px;height:7px;background:#ffffff"></div>
<div class="a" style="left:16px;top:8px;width:8px;height:7px;background:#ffffff"></div>
<div class="a" style="left:24px;top:8px;width:8px;height:7px;background:#ffffff"></div>
<div class="a" style="left:32px;top:8px;width:8px;height:7px;background:#ffffff"></div>
<div class="a" style="left:40px;top:8px;width:8px;height:7px;background:#f0ecdc"></div>
<div class="a" style="left:48px;top:8px;width:8px;height:7px;background:#ecebd4"></div>
<div class="a" style="left:56px;top:8px;width:8px;height:7px;background:#ecebd4"></div>
<div class="a" style="left:64px;top:8px;width:8px;height:7px;background:#ecebd4"></div>
<div class="a" style="left:72px;top:8px;width:8px;height:7px;background:#ecebd4"></div>
<div class="a" style="left:80px;top:8px;width:8px;height:7px;background:#d4dcc0"></div>
<div class="a" style="left:88px;top:8px;width:8px;height:7px;background:#d4dcc0"></div>
<div class="a" style="left:96px;top:8px;width:8px;height:7px;background:#d4dcc0"></div>
<div class="a" style="left:104px;top:8px;width:8px;height:7px;background:#d4dcc0"></div>
<div class="a" style="left:112px;top:8px;width:8px;height:7px;background:#d4dcc0"></div>
<div class="a" style="left:120px;top:8px;width:8px;height:7px;background:#ffffff"></div>
<div class="a" style="left:128px;top:8px;width:8px;height:7px;background:#ffffff"></div>
<div class="a" style="left:136px;top:8px;width:8px;height:7px;background:#ffffff"></div>
<div class="a" style="left:144px;top:8px;width:8px;height:7px;background:#ffffff"></div>
<div class="a" style="left:152px;top:8px;width:8px;height:7px;background:#ffffff"></div>
<div class="a" style="left:0px;top:16px;width:8px;height:7px;background:#ffffff"></div>
<div class="a" style="left:8px;top:16px;width:8px;height:7px;background:#ffffff"></div>
<div class="a" style="left:16px;top:16px;width:8px;height:7px;background:#ffffff"></div>
<div class="a" style="left:24px;top:16px;width:8px;height:7px;background:#d8cbb0"></div>
<div class="a" style="left:32px;top:16px;width:8px;height:7px;background:#d8cbb0"></div>
<div class="a" style="left:40px;top:16px;width:8px;height:7px;background:#d8cbb0"></div>
<div class="a" style="left:48px;top:16px;width:8px;height:7px;background:#efe9c8"></div>
<div class="a" style="left:56px;top:16px;width:8px;height:7px;background:#eeee9a"></div>
<div class="a" style="left:64px;top:16px;width:8px;height:7px;background:#eeee9a"></div>
<div class="a" style="left:72px;top:16px;width:8px;height:7px;background:#eeee9a"></div>
<div class="a" style="left:80px;top:16px;width:8px;height:7px;background:#c8d890"></div>
<div class="a" style="left:88px;top:16px;width:8px;height:7px;background:#c8d890"></div>
<div class="a" style="left:96px;top:16px;width:8px;height:7px;background:#c8d890"></div>
<div class="a" style="left:104px;top:16px;width:8px;height:7px;background:#d0d8b0"></div>
<div class="a" style="left:112px;top:16px;width:8px;height:7px;background:#b0c4a8"></div>
<div class="a" style="left:120px;top:16px;width:8px;height:7px;background:#b0c4a8"></div>
<div class="a" style="left:128px;top:16px;width:8px;height:7px;background:#b0c4a8"></div>
<div class="a" style="left:136px;top:16px;width:8px;height:7px;background:#ffffff"></div>
<div class="a" style="left:144px;top:16px;width:8px;height:7px;background:#ffffff"></div>
<div class="a" style="left:152px;top:16px;width:8px;height:7px;background:#ffffff"></div>
<div class="a" style="left:0px;top:24px;width:8px;height:7px;background:#ffffff"></div>
<div class="a" style="left:8px;top:24px;width:8px;height:7px;background:#ffffff"></div>
<div class="a" style="left:16px;top:24px;width:8px;height:7px;background:#d8c8a8"></div>
<div class="a" style="left:24px;top:24px;width:8px;height:7px;background:#d8c8a8"></div>
<div class="a" style="left:32px;top:24px;width:8px;height:7px;background:#d8c8a8"></div>
<div class="a" style="left:40px;top:24px;width:8px;height:7px;background:#d8c8a8"></div>
<div class="a" style="left:48px;top:24px;width:8px;height:7px;background:#f0f0a0"></div>
<div class="a" style="left:56px;top:24px;width:8px;height:7px;background:#f0f0a0"></div>
<div class="a" style="left:64px;top:24px;width:8px;height:7px;background:#f0f0a0"></div>
<div class="a" style="left:72px;top:24px;width:8px;height:7px;background:#f0f0a0"></div>
<div class="a" style="left:80px;top:24px;width:8px;height:7px;background:#c0d898"></div>
<div class="a" style="left:88px;top:24px;width:8px;height:7px;background:#c0d898"></div>
<div class="a" style="left:96px;top:24px;width:8px;height:7px;background:#c0d898"></div>
<div class="a" style="left:104px;top:24px;width:8px;height:7px;background:#c0d898"></div>
<div class="a" style="left:112px;top:24px;width:8px;height:7px;background:#a8c4a0"></div>
<div class="a" style="left:120px;top:24px;width:8px;height:7px;background:#a8c4a0"></div>
<div class="a" style="left:128px;top:24px;width:8px;height:7px;background:#a8c4a0"></div>
<div class="a" style="left:136px;top:24px;width:8px;height:7px;background:#a8c4a0"></div>
<div class="a" style="left:144px;top:24px;width:8px;height:7px;background:#ffffff"></div>
<div class="a" style="left:152px;top:24px;width:8px;height:7px;background:#ffffff"></div>
<div class="a" style="left:0px;top:32px;width:8px;height:7px;background:#ffffff"></div>
<div class="a" style="left:8px;top:32px;width:8px;height:7px;background:#ffffff"></div>
<div class="a" style="left:16px;top:32px;width:8px;height:7px;background:#d8c4a0"></div>
<div class="a" style="left:24px;top:32px;width:8px;height:7px;background:#d8c4a0"></div>
<div class="a" style="left:32px;top:32px;width:8px;height:7px;background:#d8c4a0"></div>
<div class="a" style="left:40px;top:32px;width:8px;height:7px;background:#e8d088"></div>
<div class="a" style="left:48px;top:32px;width:8px;height:7px;background:#e8d088"></div>
<div class="a" style="left:56px;top:32px;width:8px;height:7px;background:#f2ee30"></div>
<div class="a" style="left:64px;top:32px;width:8px;height:7px;background:#f2ee30"></div>
<div class="a" style="left:72px;top:32px;width:8px;height:7px;background:#f2ee30"></div>
<div class="a" style="left:80px;top:32px;width:8px;height:7px;background:#b0e040"></div>
<div class="a" style="left:88px;top:32px;width:8px;height:7px;background:#b0e040"></div>
<div class="a" style="left:96px;top:32px;width:8px;height:7px;background:#b0e040"></div>
<div class="a" style="left:104px;top:32px;width:8px;height:7px;background:#90c890"></div>
<div class="a" style="left:112px;top:32px;width:8px;height:7px;background:#90c890"></div>
<div class="a" style="left:120px;top:32px;width:8px;height:7px;background:#90c890"></div>
<div class="a" style="left:128px;top:32px;width:8px;height:7px;background:#90c890"></div>
<div class="a" style="left:136px;top:32px;width:8px;height:7px;background:#90c890"></div>
<div class="a" style="left:144px;top:32px;width:8px;height:7px;background:#ffffff"></div>
<div class="a" style="left:152px;top:32px;width:8px;height:7px;background:#ffffff"></div>
<div class="a" style="left:0px;top:40px;width:8px;height:7px;background:#ffffff"></div>
<div class="a" style="left:8px;top:40px;width:8px;height:7px;background:#c8a888"></div>
<div class="a" style="left:16px;top:40px;width:8px;height:7px;background:#dcc4a0"></div>
<div class="a" style="left:24px;top:40px;width:8px;height:7px;background:#dcc4a0"></div>
<div class="a" style="left:32px;top:40px;width:8px;height:7px;background:#e8cc80"></div>
<div class="a" style="left:40px;top:40px;width:8px;height:7px;background:#e8cc80"></div>
<div class="a" style="left:48px;top:40px;width:8px;height:7px;background:#e8cc80"></div>
<div class="a" style="left:56px;top:40px;width:8px;height:7px;background:#f0c040"></div>
<div class="a" style="left:64px;top:40px;width:8px;height:7px;background:#f0f020"></div>
<div class="a" style="left:72px;top:40px;width:8px;height:7px;background:#f0f020"></div>
<div class="a" style="left:80px;top:40px;width:8px;height:7px;background:#a8e030"></div>
<div class="a" style="left:88px;top:40px;width:8px;height:7px;background:#a8e030"></div>
<div class="a" style="left:96px;top:40px;width:8px;height:7px;background:#40c030"></div>
<div class="a" style="left:104px;top:40px;width:8px;height:7px;background:#70c070"></div>
<div class="a" style="left:112px;top:40px;width:8px;height:7px;background:#70c070"></div>
<div class="a" style="left:120px;top:40px;width:8px;height:7px;background:#70c070"></div>
<div class="a" style="left:128px;top:40px;width:8px;height:7px;background:#a0c0a0"></div>
<div class="a" style="left:136px;top:40px;width:8px;height:7px;background:#a0c0a0"></div>
<div class="a" style="left:144px;top:40px;width:8px;height:7px;background:#80a8a0"></div>
<div class="a" style="left:152px;top:40px;width:8px;height:7px;background:#ffffff"></div>
<div class="a" style="left:0px;top:48px;width:8px;height:7px;background:#c4a484"></div>
<div class="a" style="left:8px;top:48px;width:8px;height:7px;background:#c4a484"></div>
<div class="a" style="left:16px;top:48px;width:8px;height:7px;background:#c4a484"></div>
<div class="a" style="left:24px;top:48px;width:8px;height:7px;background:#d8a870"></div>
<div class="a" style="left:32px;top:48px;width:8px;height:7px;background:#ecd088"></div>
<div class="a" style="left:40px;top:48px;width:8px;height:7px;background:#ecd088"></div>
<div class="a" style="left:48px;top:48px;width:8px;height:7px;background:#f0c040"></div>
<div class="a" style="left:56px;top:48px;width:8px;height:7px;background:#f0c040"></div>
<div class="a" style="left:64px;top:48px;width:8px;height:7px;background:#ffffff"></div>
<div class="a" style="left:72px;top:48px;width:8px;height:7px;background:#ffffff"></div>
<div class="a" style="left:80px;top:48px;width:8px;height:7px;background:#ffffff"></div>
<div class="a" style="left:88px;top:48px;width:8px;height:7px;background:#ffffff"></div>
<div class="a" style="left:96px;top:48px;width:8px;height:7px;background:#40c040"></div>
<div class="a" style="left:104px;top:48px;width:8px;height:7px;background:#40c040"></div>
<div class="a" style="left:112px;top:48px;width:8px;height:7px;background:#60c068"></div>
<div class="a" style="left:120px;top:48px;width:8px;height:7px;background:#60c068"></div>
<div class="a" style="left:128px;top:48px;width:8px;height:7px;background:#60a098"></div>
<div class="a" style="left:136px;top:48px;width:8px;height:7px;background:#60a098"></div>
<div class="a" style="left:144px;top:48px;width:8px;height:7px;background:#60a098"></div>
<div class="a" style="left:152px;top:48px;width:8px;height:7px;background:#60a098"></div>
<div class="a" style="left:0px;top:56px;width:8px;height:7px;background:#c4a080"></div>
<div class="a" style="left:8px;top:56px;width:8px;height:7px;background:#c4a080"></div>
<div class="a" style="left:16px;top:56px;width:8px;height:7px;background:#dca070"></div>
<div class="a" style="left:24px;top:56px;width:8px;height:7px;background:#dca070"></div>
<div class="a" style="left:32px;top:56px;width:8px;height:7px;background:#f09030"></div>
<div class="a" style="left:40px;top:56px;width:8px;height:7px;background:#f0b830"></div>
<div class="a" style="left:48px;top:56px;width:8px;height:7px;background:#f0b830"></div>
<div class="a" style="left:56px;top:56px;width:8px;height:7px;background:#ffffff"></div>
<div class="a" style="left:64px;top:56px;width:8px;height:7px;background:#ffffff"></div>
<div class="a" style="left:72px;top:56px;width:8px;height:7px;background:#ffffff"></div>
<div class="a" style="left:80px;top:56px;width:8px;height:7px;background:#ffffff"></div>
<div class="a" style="left:88px;top:56px;width:8px;height:7px;background:#ffffff"></div>
<div class="a" style="left:96px;top:56px;width:8px;height:7px;background:#ffffff"></div>
<div class="a" style="left:104px;top:56px;width:8px;height:7px;background:#40c040"></div>
<div class="a" style="left:112px;top:56px;width:8px;height:7px;background:#40c040"></div>
<div class="a" style="left:120px;top:56px;width:8px;height:7px;background:#40a098"></div>
<div class="a" style="left:128px;top:56px;width:8px;height:7px;background:#40a098"></div>
<div class="a" style="left:136px;top:56px;width:8px;height:7px;background:#40a098"></div>
<div class="a" style="left:144px;top:56px;width:8px;height:7px;background:#40a098"></div>
<div class="a" style="left:152px;top:56px;width:8px;height:7px;background:#40a098"></div>
<div class="a" style="left:0px;top:64px;width:8px;height:7px;background:#c49878"></div>
<div class="a" style="left:8px;top:64px;width:8px;height:7px;background:#c49878"></div>
<div class="a" style="left:16px;top:64px;width:8px;height:7px;background:#dc9868"></div>
<div class="a" style="left:24px;top:64px;width:8px;height:7px;background:#dc9868"></div>
<div class="a" style="left:32px;top:64px;width:8px;height:7px;background:#f08828"></div>
<div class="a" style="left:40px;top:64px;width:8px;height:7px;background:#f08828"></div>
<div class="a" style="left:48px;top:64px;width:8px;height:7px;background:#ffffff"></div>
<div class="a" style="left:56px;top:64px;width:8px;height:7px;background:#ffffff"></div>
<div class="a" style="left:64px;top:64px;width:8px;height:7px;background:#ffffff"></div>
<div class="a" style="left:72px;top:64px;width:8px;height:7px;background:#ffffff"></div>
<div class="a" style="left:80px;top:64px;width:8px;height:7px;background:#ffffff"></div>
<div class="a" style="left:88px;top:64px;width:8px;height:7px;background:#ffffff"></div>
<div class="a" style="left:96px;top:64px;width:8px;height:7px;background:#ffffff"></div>
<div class="a" style="left:104px;top:64px;width:8px;height:7px;background:#ffffff"></div>
<div class="a" style="left:112px;top:64px;width:8px;height:7px;background:#3898a0"></div>
<div class="a" style="left:120px;top:64px;width:8px;height:7px;background:#3898a0"></div>
<div class="a" style="left:128px;top:64px;width:8px;height:7px;background:#3898a0"></div>
<div class="a" style="left:136px;top:64px;width:8px;height:7px;background:#3898a0"></div>
<div class="a" style="left:144px;top:64px;width:8px;height:7px;background:#3898a0"></div>
<div class="a" style="left:152px;top:64px;width:8px;height:7px;background:#3898a0"></div>
<div class="a" style="left:0px;top:72px;width:8px;height:7px;background:#c89878"></div>
<div class="a" style="left:8px;top:72px;width:8px;height:7px;background:#c89878"></div>
<div class="a" style="left:16px;top:72px;width:8px;height:7px;background:#c89878"></div>
<div class="a" style="left:24px;top:72px;width:8px;height:7px;background:#c89878"></div>
<div class="a" style="left:32px;top:72px;width:8px;height:7px;background:#f08828"></div>
<div class="a" style="left:40px;top:72px;width:8px;height:7px;background:#f08828"></div>
<div class="a" style="left:48px;top:72px;width:8px;height:7px;background:#ffffff"></div>
<div class="a" style="left:56px;top:72px;width:8px;height:7px;background:#ffffff"></div>
<div class="a" style="left:64px;top:72px;width:8px;height:7px;background:#ffffff"></div>
<div class="a" style="left:72px;top:72px;width:8px;height:7px;background:#ffffff"></div>
<div class="a" style="left:80px;top:72px;width:8px;height:7px;background:#ffffff"></div>
<div class="a" style="left:88px;top:72px;width:8px;height:7px;background:#ffffff"></div>
<div class="a" style="left:96px;top:72px;width:8px;height:7px;background:#ffffff"></div>
<div class="a" style="left:104px;top:72px;width:8px;height:7px;background:#ffffff"></div>
<div class="a" style="left:112px;top:72px;width:8px;height:7px;background:#309890"></div>
<div class="a" style="left:120px;top:72px;width:8px;height:7px;background:#309890"></div>
<div class="a" style="left:128px;top:72px;width:8px;height:7px;background:#309890"></div>
<div class="a" style="left:136px;top:72px;width:8px;height:7px;background:#309890"></div>
<div class="a" style="left:144px;top:72px;width:8px;height:7px;background:#309890"></div>
<div class="a" style="left:152px;top:72px;width:8px;height:7px;background:#309890"></div>
<div class="a" style="left:0px;top:80px;width:8px;height:7px;background:#c88c70"></div>
<div class="a" style="left:8px;top:80px;width:8px;height:7px;background:#c88c70"></div>
<div class="a" style="left:16px;top:80px;width:8px;height:7px;background:#c88c70"></div>
<div class="a" style="left:24px;top:80px;width:8px;height:7px;background:#c88c70"></div>
<div class="a" style="left:32px;top:80px;width:8px;height:7px;background:#f07020"></div>
<div class="a" style="left:40px;top:80px;width:8px;height:7px;background:#f07020"></div>
<div class="a" style="left:48px;top:80px;width:8px;height:7px;background:#ffffff"></div>
<div class="a" style="left:56px;top:80px;width:8px;height:7px;background:#ffffff"></div>
<div class="a" style="left:64px;top:80px;width:8px;height:7px;background:#ffffff"></div>
<div class="a" style="left:72px;top:80px;width:8px;height:7px;background:#ffffff"></div>
<div class="a" style="left:80px;top:80px;width:8px;height:7px;background:#ffffff"></div>
<div class="a" style="left:88px;top:80px;width:8px;height:7px;background:#ffffff"></div>
<div class="a" style="left:96px;top:80px;width:8px;height:7px;background:#ffffff"></div>
<div class="a" style="left:104px;top:80px;width:8px;height:7px;background:#ffffff"></div>
<div class="a" style="left:112px;top:80px;width:8px;height:7px;background:#2070e0"></div>
<div class="a" style="left:120px;top:80px;width:8px;height:7px;background:#2870d8"></div>
<div class="a" style="left:128px;top:80px;width:8px;height:7px;background:#3070d0"></div>
<div class="a" style="left:136px;top:80px;width:8px;height:7px;background:#3870c8"></div>
<div class="a" style="left:144px;top:80px;width:8px;height:7px;background:#4070c0"></div>
<div class="a" style="left:152px;top:80px;width:8px;height:7px;background:#4870b8"></div>
<div class="a" style="left:0px;top:88px;width:8px;height:7px;background:#c88068"></div>
<div class="a" style="left:8px;top:88px;width:8px;height:7px;background:#c88068"></div>
<div class="a" style="left:16px;top:88px;width:8px;height:7px;background:#c88068"></div>
<div class="a" style="left:24px;top:88px;width:8px;height:7px;background:#c88068"></div>
<div class="a" style="left:32px;top:88px;width:8px;height:7px;background:#f06020"></div>
<div class="a" style="left:40px;top:88px;width:8px;height:7px;background:#f06020"></div>
<div class="a" style="left:48px;top:88px;width:8px;height:7px;background:#ffffff"></div>
<div class="a" style="left:56px;top:88px;width:8px;height:7px;background:#ffffff"></div>
<div class="a" style="left:64px;top:88px;width:8px;height:7px;background:#ffffff"></div>
<div class="a" style="left:72px;top:88px;width:8px;height:7px;background:#ffffff"></div>
<div class="a" style="left:80px;top:88px;width:8px;height:7px;background:#ffffff"></div>
<div class="a" style="left:88px;top:88px;width:8px;height:7px;background:#ffffff"></div>
<div class="a" style="left:96px;top:88px;width:8px;height:7px;background:#ffffff"></div>
<div class="a" style="left:104px;top:88px;width:8px;height:7px;background:#ffffff"></div>
<div class="a" style="left:112px;top:88px;width:8px;height:7px;background:#2068e8"></div>
<div class="a" style="left:120px;top:88px;width:8px;height:7px;background:#2870e0"></div>
<div class="a" style="left:128px;top:88px;width:8px;height:7px;background:#3070d8"></div>
<div class="a" style="left:136px;top:88px;width:8px;height:7px;background:#4078c8"></div>
<div class="a" style="left:144px;top:88px;width:8px;height:7px;background:#4878c0"></div>
<div class="a" style="left:152px;top:88px;width:8px;height:7px;background:#5078c0"></div>
<div class="a" style="left:0px;top:96px;width:8px;height:7px;background:#c07860"></div>
<div class="a" style="left:8px;top:96px;width:8px;height:7px;background:#c07860"></div>
<div class="a" style="left:16px;top:96px;width:8px;height:7px;background:#c07860"></div>
<div class="a" style="left:24px;top:96px;width:8px;height:7px;background:#c07860"></div>
<div class="a" style="left:32px;top:96px;width:8px;height:7px;background:#f06020"></div>
<div class="a" style="left:40px;top:96px;width:8px;height:7px;background:#e01020"></div>
<div class="a" style="left:48px;top:96px;width:8px;height:7px;background:#e01020"></div>
<div class="a" style="left:56px;top:96px;width:8px;height:7px;background:#ffffff"></div>
<div class="a" style="left:64px;top:96px;width:8px;height:7px;background:#ffffff"></div>
<div class="a" style="left:72px;top:96px;width:8px;height:7px;background:#ffffff"></div>
<div class="a" style="left:80px;top:96px;width:8px;height:7px;background:#ffffff"></div>
<div class="a" style="left:88px;top:96px;width:8px;height:7px;background:#ffffff"></div>
<div class="a" style="left:96px;top:96px;width:8px;height:7px;background:#ffffff"></div>
<div class="a" style="left:104px;top:96px;width:8px;height:7px;background:#5020d0"></div>
<div class="a" style="left:112px;top:96px;width:8px;height:7px;background:#5020d0"></div>
<div class="a" style="left:120px;top:96px;width:8px;height:7px;background:#3070d0"></div>
<div class="a" style="left:128px;top:96px;width:8px;height:7px;background:#3870c8"></div>
<div class="a" style="left:136px;top:96px;width:8px;height:7px;background:#4070c0"></div>
<div class="a" style="left:144px;top:96px;width:8px;height:7px;background:#4870b8"></div>
<div class="a" style="left:152px;top:96px;width:8px;height:7px;background:#5070b0"></div>
<div class="a" style="left:0px;top:104px;width:8px;height:7px;background:#b87060"></div>
<div class="a" style="left:8px;top:104px;width:8px;height:7px;background:#b87060"></div>
<div class="a" style="left:16px;top:104px;width:8px;height:7px;background:#b87060"></div>
<div class="a" style="left:24px;top:104px;width:8px;height:7px;background:#b87060"></div>
<div class="a" style="left:32px;top:104px;width:8px;height:7px;background:#d04848"></div>
<div class="a" style="left:40px;top:104px;width:8px;height:7px;background:#d04848"></div>
<div class="a" style="left:48px;top:104px;width:8px;height:7px;background:#e01828"></div>
<div class="a" style="left:56px;top:104px;width:8px;height:7px;background:#e01828"></div>
<div class="a" style="left:64px;top:104px;width:8px;height:7px;background:#ffffff"></div>
<div class="a" style="left:72px;top:104px;width:8px;height:7px;background:#ffffff"></div>
<div class="a" style="left:80px;top:104px;width:8px;height:7px;background:#ffffff"></div>
<div class="a" style="left:88px;top:104px;width:8px;height:7px;background:#ffffff"></div>
<div class="a" style="left:96px;top:104px;width:8px;height:7px;background:#5028c8"></div>
<div class="a" style="left:104px;top:104px;width:8px;height:7px;background:#5028c8"></div>
<div class="a" style="left:112px;top:104px;width:8px;height:7px;background:#5028c8"></div>
<div class="a" style="left:120px;top:104px;width:8px;height:7px;background:#5028c8"></div>
<div class="a" style="left:128px;top:104px;width:8px;height:7px;background:#5070b0"></div>
<div class="a" style="left:136px;top:104px;width:8px;height:7px;background:#5070b0"></div>
<div class="a" style="left:144px;top:104px;width:8px;height:7px;background:#5070b0"></div>
<div class="a" style="left:152px;top:104px;width:8px;height:7px;background:#5070b0"></div>
<div class="a" style="left:0px;top:112px;width:8px;height:7px;background:#ffffff"></div>
<div class="a" style="left:8px;top:112px;width:8px;height:7px;background:#b06860"></div>
<div class="a" style="left:16px;top:112px;width:8px;height:7px;background:#b06860"></div>
<div class="a" style="left:24px;top:112px;width:8px;height:7px;background:#b06860"></div>
<div class="a" style="left:32px;top:112px;width:8px;height:7px;background:#b06860"></div>
<div class="a" style="left:40px;top:112px;width:8px;height:7px;background:#d04050"></div>
<div class="a" style="left:48px;top:112px;width:8px;height:7px;background:#d04050"></div>
<div class="a" style="left:56px;top:112px;width:8px;height:7px;background:#e01020"></div>
<div class="a" style="left:64px;top:112px;width:8px;height:7px;background:#901850"></div>
<div class="a" style="left:72px;top:112px;width:8px;height:7px;background:#901850"></div>
<div class="a" style="left:80px;top:112px;width:8px;height:7px;background:#501878"></div>
<div class="a" style="left:88px;top:112px;width:8px;height:7px;background:#501878"></div>
<div class="a" style="left:96px;top:112px;width:8px;height:7px;background:#5030a0"></div>
<div class="a" style="left:104px;top:112px;width:8px;height:7px;background:#5030a0"></div>
<div class="a" style="left:112px;top:112px;width:8px;height:7px;background:#5030a0"></div>
<div class="a" style="left:120px;top:112px;width:8px;height:7px;background:#5030a0"></div>
<div class="a" style="left:128px;top:112px;width:8px;height:7px;background:#5030a0"></div>
<div class="a" style="left:136px;top:112px;width:8px;height:7px;background:#5030a0"></div>
<div class="a" style="left:144px;top:112px;width:8px;height:7px;background:#6070b0"></div>
<div class="a" style="left:152px;top:112px;width:8px;height:7px;background:#ffffff"></div>
<div class="a" style="left:0px;top:120px;width:8px;height:7px;background:#ffffff"></div>
<div class="a" style="left:8px;top:120px;width:8px;height:7px;background:#ffffff"></div>
<div class="a" style="left:16px;top:120px;width:8px;height:7px;background:#a86060"></div>
<div class="a" style="left:24px;top:120px;width:8px;height:7px;background:#a86060"></div>
<div class="a" style="left:32px;top:120px;width:8px;height:7px;background:#a86060"></div>
<div class="a" style="left:40px;top:120px;width:8px;height:7px;background:#c84848"></div>
<div class="a" style="left:48px;top:120px;width:8px;height:7px;background:#c84848"></div>
<div class="a" style="left:56px;top:120px;width:8px;height:7px;background:#901848"></div>
<div class="a" style="left:64px;top:120px;width:8px;height:7px;background:#901848"></div>
<div class="a" style="left:72px;top:120px;width:8px;height:7px;background:#901848"></div>
<div class="a" style="left:80px;top:120px;width:8px;height:7px;background:#501870"></div>
<div class="a" style="left:88px;top:120px;width:8px;height:7px;background:#501870"></div>
<div class="a" style="left:96px;top:120px;width:8px;height:7px;background:#501870"></div>
<div class="a" style="left:104px;top:120px;width:8px;height:7px;background:#503090"></div>
<div class="a" style="left:112px;top:120px;width:8px;height:7px;background:#503090"></div>
<div class="a" style="left:120px;top:120px;width:8px;height:7px;background:#503090"></div>
<div class="a" style="left:128px;top:120px;width:8px;height:7px;background:#503090"></div>
<div class="a" style="left:136px;top:120px;width:8px;height:7px;background:#503090"></div>
<div class="a" style="left:144px;top:120px;width:8px;height:7px;background:#ffffff"></div>
<div class="a" style="left:152px;top:120px;width:8px;height:7px;background:#ffffff"></div>
<div class="a" style="left:0px;top:128px;width:8px;height:7px;background:#ffffff"></div>
<div class="a" style="left:8px;top:128px;width:8px;height:7px;background:#ffffff"></div>
<div class="a" style="left:16px;top:128px;width:8px;height:7px;background:#a06060"></div>
<div class="a" style="left:24px;top:128px;width:8px;height:7px;background:#a06060"></div>
<div class="a" style="left:32px;top:128px;width:8px;height:7px;background:#a06060"></div>
<div class="a" style="left:40px;top:128px;width:8px;height:7px;background:#a06060"></div>
<div class="a" style="left:48px;top:128px;width:8px;height:7px;background:#703050"></div>
<div class="a" style="left:56px;top:128px;width:8px;height:7px;background:#703050"></div>
<div class="a" style="left:64px;top:128px;width:8px;height:7px;background:#703050"></div>
<div class="a" style="left:72px;top:128px;width:8px;height:7px;background:#703050"></div>
<div class="a" style="left:80px;top:128px;width:8px;height:7px;background:#402060"></div>
<div class="a" style="left:88px;top:128px;width:8px;height:7px;background:#402060"></div>
<div class="a" style="left:96px;top:128px;width:8px;height:7px;background:#402060"></div>
<div class="a" style="left:104px;top:128px;width:8px;height:7px;background:#402060"></div>
<div class="a" style="left:112px;top:128px;width:8px;height:7px;background:#483070"></div>
<div class="a" style="left:120px;top:128px;width:8px;height:7px;background:#483070"></div>
<div class="a" style="left:128px;top:128px;width:8px;height:7px;background:#483070"></div>
<div class="a" style="left:136px;top:128px;width:8px;height:7px;background:#483070"></div>
<div class="a" style="left:144px;top:128px;width:8px;height:7px;background:#ffffff"></div>
<div class="a" style="left:152px;top:128px;width:8px;height:7px;background:#ffffff"></div>
<div class="a" style="left:0px;top:136px;width:8px;height:7px;background:#ffffff"></div>
<div class="a" style="left:8px;top:136px;width:8px;height:7px;background:#ffffff"></div>
<div class="a" style="left:16px;top:136px;width:8px;height:7px;background:#ffffff"></div>
<div class="a" style="left:24px;top:136px;width:8px;height:7px;background:#906068"></div>
<div class="a" style="left:32px;top:136px;width:8px;height:7px;background:#906068"></div>
<div class="a" style="left:40px;top:136px;width:8px;height:7px;background:#906068"></div>
<div class="a" style="left:48px;top:136px;width:8px;height:7px;background:#683050"></div>
<div class="a" style="left:56px;top:136px;width:8px;height:7px;background:#683050"></div>
<div class="a" style="left:64px;top:136px;width:8px;height:7px;background:#683050"></div>
<div class="a" style="left:72px;top:136px;width:8px;height:7px;background:#683050"></div>
<div class="a" style="left:80px;top:136px;width:8px;height:7px;background:#382050"></div>
<div class="a" style="left:88px;top:136px;width:8px;height:7px;background:#382050"></div>
<div class="a" style="left:96px;top:136px;width:8px;height:7px;background:#382050"></div>
<div class="a" style="left:104px;top:136px;width:8px;height:7px;background:#382050"></div>
<div class="a" style="left:112px;top:136px;width:8px;height:7px;background:#403060"></div>
<div class="a" style="left:120px;top:136px;width:8px;height:7px;background:#403060"></div>
<div class="a" style="left:128px;top:136px;width:8px;height:7px;background:#403060"></div>
<div class="a" style="left:136px;top:136px;width:8px;height:7px;background:#ffffff"></div>
<div class="a" style="left:144px;top:136px;width:8px;height:7px;background:#ffffff"></div>
<div class="a" style="left:152px;top:136px;width:8px;height:7px;background:#ffffff"></div>
<div class="a" style="left:0px;top:144px;width:8px;height:7px;background:#ffffff"></div>
<div class="a" style="left:8px;top:144px;width:8px;height:7px;background:#ffffff"></div>
<div class="a" style="left:16px;top:144px;width:8px;height:7px;background:#ffffff"></div>
<div class="a" style="left:24px;top:144px;width:8px;height:7px;background:#ffffff"></div>
<div class="a" style="left:32px;top:144px;width:8px;height:7px;background:#ffffff"></div>
<div class="a" style="left:40px;top:144px;width:8px;height:7px;background:#583048"></div>
<div class="a" style="left:48px;top:144px;width:8px;height:7px;background:#603048"></div>
<div class="a" style="left:56px;top:144px;width:8px;height:7px;background:#603048"></div>
<div class="a" style="left:64px;top:144px;width:8px;height:7px;background:#603048"></div>
<div class="a" style="left:72px;top:144px;width:8px;height:7px;background:#603048"></div>
<div class="a" style="left:80px;top:144px;width:8px;height:7px;background:#302040"></div>
<div class="a" style="left:88px;top:144px;width:8px;height:7px;background:#302040"></div>
<div class="a" style="left:96px;top:144px;width:8px;height:7px;background:#302040"></div>
<div class="a" style="left:104px;top:144px;width:8px;height:7px;background:#302040"></div>
<div class="a" style="left:112px;top:144px;width:8px;height:7px;background:#302040"></div>
<div class="a" style="left:120px;top:144px;width:8px;height:7px;background:#ffffff"></div>
<div class="a" style="left:128px;top:144px;width:8px;height:7px;background:#ffffff"></div>
<div class="a" style="left:136px;top:144px;width:8px;height:7px;background:#ffffff"></div>
<div class="a" style="left:144px;top:144px;width:8px;height:7px;background:#ffffff"></div>
<div class="a" style="left:152px;top:144px;width:8px;height:7px;background:#ffffff"></div>
</div>
<svg width="160" height="152" style="left:1095px;top:184px"><path d="M7.5,0v152M15.5,0v152M23.5,0v152M31.5,0v152M39.5,0v152M47.5,0v152M55.5,0v152M63.5,0v152M71.5,0v152M79.5,0v152M87.5,0v152M95.5,0v152M103.5,0v152M111.5,0v152M119.5,0v152M127.5,0v152M135.5,0v152M143.5,0v152M151.5,0v152" stroke="#000" stroke-opacity="0.22" stroke-width="1"/></svg>
<!-- taskbar icons -->
<div class="a" style="left:261px;top:691px;width:33px;height:29px;background:#2c2c2c"></div>
<div class="a" style="left:100px;top:717px;width:27px;height:2px;background:#8cb4d4"></div>
<div class="a" style="left:134px;top:717px;width:26px;height:2px;background:#8cb4d4"></div>
<div class="a" style="left:261px;top:717px;width:33px;height:2px;background:#8cb4d4"></div>
<div class="a" style="left:525px;top:717px;width:26px;height:2px;background:#8cb4d4"></div>
<svg width="560" height="29" style="left:0;top:691px">
  <!-- windows -->
  <path d="M10,9.5l5,-0.7v4.6h-5zM16,8.6l6.5,-0.9v5.7h-6.5zM10,14.5h5v4.6l-5,-0.7zM16,14.5h6.5v5.7l-6.5,-0.9z" fill="#f4f4f4"/>
  <!-- task view -->
  <path d="M42,9.5h3v10h-3M52,9.5h-3v10h3M46,12h2v5h-2z" fill="none" stroke="#eee" stroke-width="1.2"/>
  <!-- red lightning -->
  <rect x="74" y="7" width="16" height="15" fill="#c41a1a"/>
  <path d="M84,9l-5,7h3l-2,5l5,-7h-3z" fill="#fff"/>
  <!-- chrome -->
  <circle cx="114.5" cy="14.5" r="7.5" fill="#dd4b39"/>
  <path d="M114.5,14.5L121.5,11A7.5,7.5 0 0 1 118,21.2z" fill="#f2c230"/>
  <path d="M114.5,14.5L118,21.2A7.5,7.5 0 0 1 107.2,12z" fill="#20a060"/>
  <circle cx="114.5" cy="14.5" r="3.5" fill="#fff"/><circle cx="114.5" cy="14.5" r="2.6" fill="#3b7ce8"/>
  <!-- obs -->
  <circle cx="147" cy="14.5" r="7.5" fill="#1a1a1a" stroke="#e8e8e8" stroke-width="1.3"/>
  <path d="M144,10q3,-2 5,1M151,16q-1,4 -5,3M143,17q-2,-3 1,-6" stroke="#e8e8e8" stroke-width="1.3" fill="none"/>
  <!-- discord -->
  <rect x="172" y="8" width="15" height="13" rx="3" fill="#7289da"/>
  <path d="M175,12q4.5,-2 9,0v4q-4.5,2 -9,0z" fill="#fff"/><circle cx="177.5" cy="14" r="1" fill="#7289da"/><circle cx="181.5" cy="14" r="1" fill="#7289da"/>
  <!-- red/blue app -->
  <rect x="206" y="8" width="13" height="13" fill="#c05060" transform="rotate(-12 212 14)"/>
  <rect x="209" y="10" width="7" height="9" fill="#e8e8f0"/><path d="M210,12h5M210,15h5" stroke="#4050a0" stroke-width="1.4"/>
  <!-- map pin -->
  <circle cx="244.5" cy="14.5" r="7.5" fill="#1e6fe0"/><circle cx="244.5" cy="13" r="2.5" fill="#fff"/><path d="M243.3,15h2.4l-1.2,4z" fill="#fff"/>
  <!-- photoshop -->
  <rect x="270.5" y="7.5" width="14" height="14" fill="#001e36" stroke="#31a8ff" stroke-width="1"/>
  <text x="272" y="18" font-size="8" font-family="Liberation Sans" fill="#31a8ff">Ps</text>
  <!-- lock app -->
  <circle cx="310" cy="14.5" r="7.5" fill="#e8e8f0"/><circle cx="310" cy="14.5" r="5.5" fill="#4a3a8a"/><rect x="307" y="13" width="6" height="5" fill="#e8e8f0"/><path d="M308,13v-2q2,-2.5 4,0v2" stroke="#e8e8f0" fill="none"/>
  <!-- drop -->
  <path d="M342,7l-4,10q4,5 8,0z" fill="#aab4c0"/><circle cx="342" cy="18" r="3" fill="#6a90b0"/>
  <!-- wine -->
  <circle cx="372" cy="13" r="3.5" fill="#c03040"/><path d="M372,16v5" stroke="#ddd"/><circle cx="378" cy="15" r="4" fill="#a8a040"/><path d="M376,10l3,-3" stroke="#60a040" stroke-width="2"/>
  <!-- steam -->
  <circle cx="407.5" cy="14.5" r="7.5" fill="#1b4a7a"/><circle cx="410" cy="12.5" r="3" fill="none" stroke="#fff" stroke-width="1.3"/><path d="M401,16l6,2" stroke="#fff" stroke-width="2"/>
  <!-- purple image -->
  <rect x="432" y="7" width="16" height="15" fill="#5a5cc0"/><path d="M434,18q4,-5 12,-2v3h-12z" fill="#e8e8f4"/><circle cx="441" cy="12" r="3" fill="#c8d0f8"/>
  <!-- blue window -->
  <rect x="465" y="9" width="15" height="11" fill="#e8f0f8"/><rect x="466" y="11" width="13" height="7" fill="#2a90d8"/><rect x="467" y="13" width="4" height="4" fill="#f0d040"/>
  <!-- gray -->
  <path d="M498,16l9,-6l6,3l-9,6z" fill="#8a8a8a"/><path d="M498,16l6,3v1l-6,-3z" fill="#555"/>
  <!-- notepad -->
  <path d="M531,9l11,-2l3,12l-11,2z" fill="#c8ece4"/><path d="M532,9l10,-2l0.5,2l-10,2z" fill="#6ab8a8"/><path d="M534,13l8,-1.5M535,16l8,-1.5" stroke="#8ac0b4" stroke-width="0.8"/>
</svg>
<!-- tray -->
<svg width="130" height="29" style="left:1030px;top:691px" fill="none" stroke="#eee" stroke-width="1">
  <rect x="10.5" y="7" width="4" height="9" rx="2" fill="#eee"/><path d="M9,15q3.5,5 7,0M12.5,18.5v2M10,20.5h5"/>
  <path d="M24,8l5,-2l5,2v5q0,5 -5,7q-5,-2 -5,-7z" fill="#eee" stroke="none"/><path d="M29,7v13M24.5,13h9" stroke="#191919"/><circle cx="33" cy="18" r="2.5" fill="#e02030" stroke="none"/>
  <circle cx="44" cy="14" r="6"/><path d="M41,11l6,6M44,8v6l3,-3" stroke-width="0.9"/><circle cx="40" cy="19" r="2" fill="#e02030" stroke="none"/>
  <path d="M57.5,9.5h5v10h-5z M58.5,7.5h3v2"/>
  <path d="M72,11q4,-4 8,0M73,16l6,3M72,10v9h9" stroke-width="0.9"/>
  <rect x="87.5" y="9.5" width="10" height="7"/><path d="M89,18.5h7M87.5,7.5v3h3" />
  <path d="M104,12h3l4,-3v11l-4,-3h-3z"/><path d="M113,11q2,3.5 0,7" />
  <path d="M121,20l3,-3l2,2l3,-6l1,-5l-3,2l-2,4l-3,1z" stroke-width="1.1"/>
</svg>
<div class="t" style="left:1172px;top:700px;font-size:8px;color:#eee">ENG</div>
<div class="t" style="left:1202px;top:695px;font-size:8px;color:#eee">1:36 PM</div>
<div class="t" style="left:1196px;top:707px;font-size:8px;color:#eee">2020-05-26</div>
<svg width="14" height="14" style="left:1248px;top:698px" fill="none" stroke="#eee" stroke-width="1"><path d="M1.5,1.5h11v8h-6l-2.5,3v-3h-2.5z"/></svg>
<div class="a" style="left:1275px;top:691px;width:2px;height:29px;background:#9a9a9a"></div>
<div class="a" style="left:1277px;top:0;width:3px;height:691px;background:#161616"></div>
<div class="a" style="left:1207px;top:12px;width:65px;height:1px;background:#5c5c5c"></div>
</body></html>
